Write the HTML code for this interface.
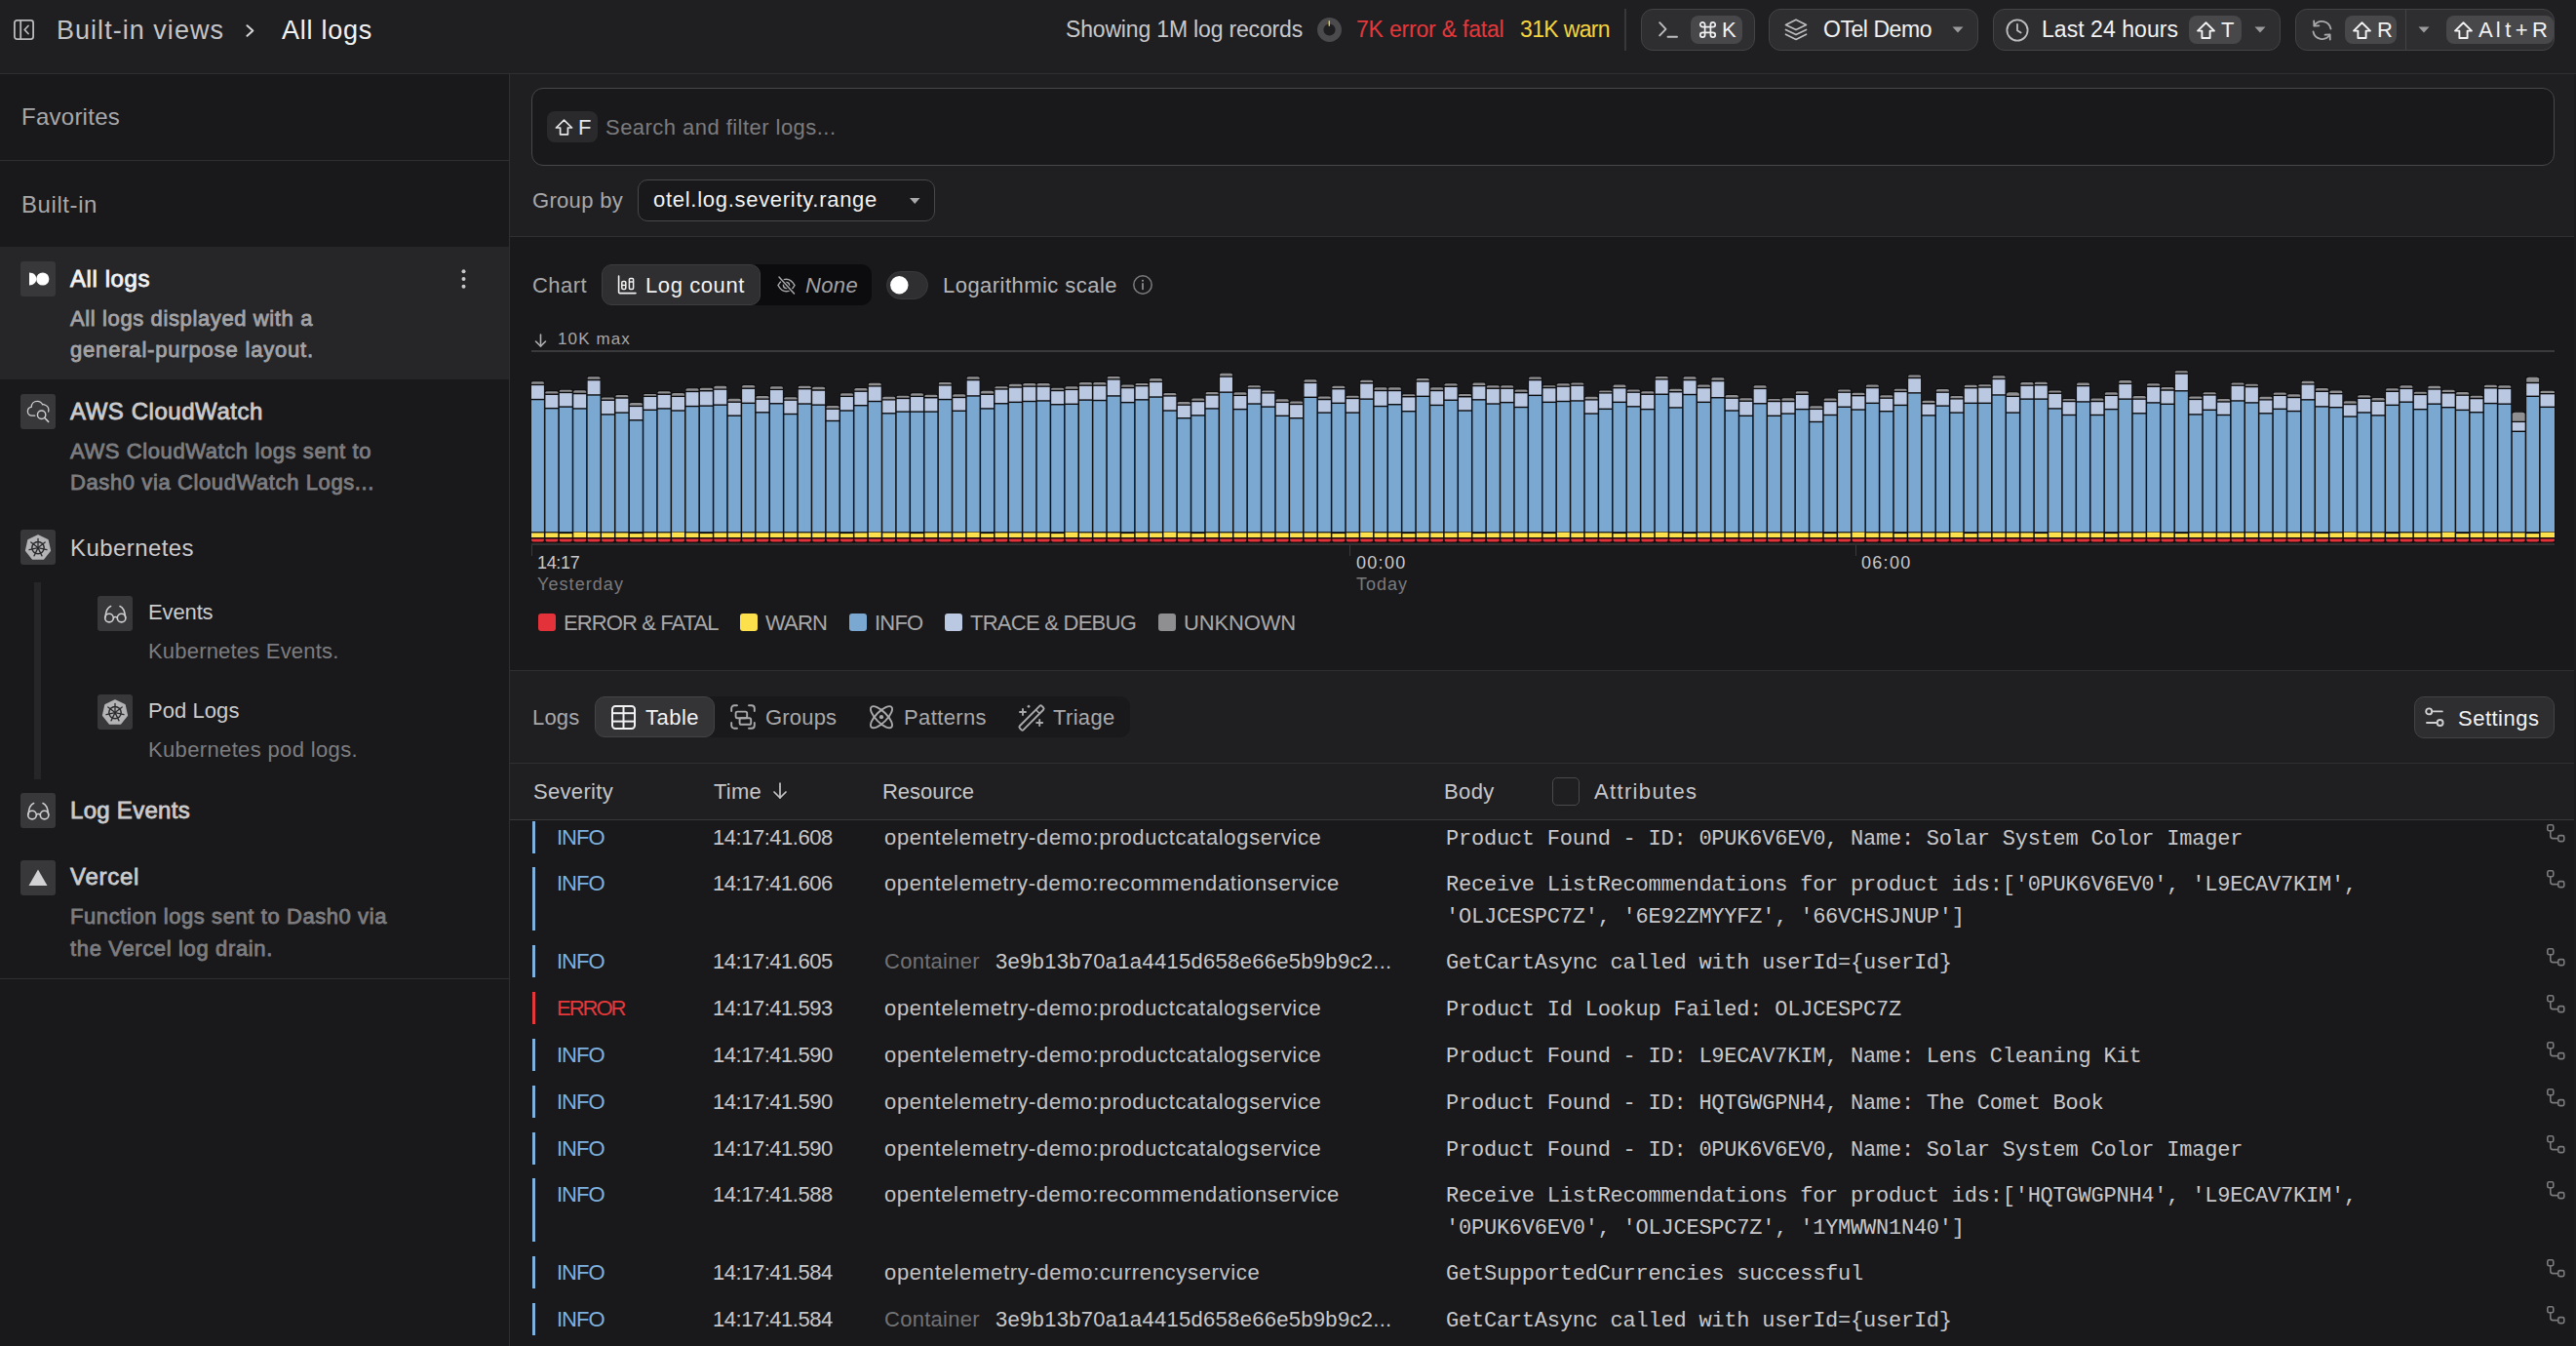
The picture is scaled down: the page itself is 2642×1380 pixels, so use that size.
<!DOCTYPE html>
<html><head><meta charset="utf-8"><title>All logs</title>
<style>
html,body{margin:0;padding:0;}
body{width:2642px;height:1380px;overflow:hidden;position:relative;background:#19191b;font-family:'Liberation Sans', sans-serif;}
.t{position:absolute;white-space:pre;}
svg{overflow:visible}
</style></head><body>
<div style="position:absolute;left:0px;top:0px;width:2642px;height:75px;background:#1f1f22;border-radius:0px;box-sizing:border-box;"></div><div style="position:absolute;left:0px;top:75px;width:2642px;height:1px;background:#2f2f32;border-radius:0px;box-sizing:border-box;"></div><svg style="position:absolute;left:14px;top:20px;" width="21" height="21" viewBox="0 0 21 21" fill="none"><rect x="0.9" y="0.9" width="19.2" height="19.2" rx="2.5" stroke="#b9b9bb" stroke-width="1.8"/><line x1="7.2" y1="1" x2="7.2" y2="20" stroke="#b9b9bb" stroke-width="1.8"/><path d="M15 6.5 L11.2 10.5 L15 14.5" stroke="#b9b9bb" stroke-width="1.8" stroke-linecap="round" stroke-linejoin="round"/></svg><div class="t" style="left:58px;top:18px;font-size:27px;line-height:27px;color:#c4c4c6;font-weight:400;font-family:'Liberation Sans', sans-serif;letter-spacing:1.032px;">Built-in views</div><svg style="position:absolute;left:252px;top:25px;" width="9" height="13" viewBox="0 0 9 13" fill="none"><path d="M1.5 1.2 L7.3 6.5 L1.5 11.8" stroke="#d6d6d8" stroke-width="2" stroke-linecap="round" stroke-linejoin="round"/></svg><div class="t" style="left:289px;top:18px;font-size:27px;line-height:27px;color:#f2f2f3;font-weight:400;font-family:'Liberation Sans', sans-serif;letter-spacing:0.744px;">All logs</div><div class="t" style="left:1093px;top:19px;font-size:23px;line-height:23px;color:#c8c8ca;font-weight:400;font-family:'Liberation Sans', sans-serif;letter-spacing:-0.170px;">Showing 1M log records</div><svg style="position:absolute;left:1351px;top:18px;" width="25" height="25" viewBox="0 0 25 25" fill="none"><circle cx="12.5" cy="12.5" r="9.3" stroke="#4b4b4e" stroke-width="6.4"/><path d="M12.3 3.2 L12.3 8.8" stroke="#f5d33d" stroke-width="1.3"/></svg><div class="t" style="left:1391px;top:19px;font-size:23px;line-height:23px;color:#e5383b;font-weight:400;font-family:'Liberation Sans', sans-serif;letter-spacing:-0.199px;">7K error &amp; fatal</div><div class="t" style="left:1559px;top:19px;font-size:23px;line-height:23px;color:#f5d33d;font-weight:400;font-family:'Liberation Sans', sans-serif;letter-spacing:-0.646px;">31K warn</div><div style="position:absolute;left:1666px;top:9px;width:2px;height:43px;background:#38383b;border-radius:0px;box-sizing:border-box;"></div><div style="position:absolute;left:1683px;top:9px;width:117px;height:43px;background:#2e2e31;border:1px solid #434346;border-radius:12px;box-sizing:border-box;"></div><svg style="position:absolute;left:1701px;top:22px;" width="20" height="18" viewBox="0 0 20 18" fill="none"><path d="M1.2 1.2 L7.5 7.8 L1.2 14.4" stroke="#bdbdbf" stroke-width="1.9" stroke-linecap="round" stroke-linejoin="round"/><line x1="9.5" y1="15.8" x2="19" y2="15.8" stroke="#bdbdbf" stroke-width="1.9" stroke-linecap="round"/></svg><div style="position:absolute;left:1734px;top:16px;width:53px;height:29px;background:#48484b;border-radius:8px;box-sizing:border-box;"></div><svg style="position:absolute;left:1743px;top:22px;" width="17" height="17" viewBox="0 0 17 17" fill="none"><path d="M5.6 3.2 L5.6 13.8 M11.4 3.2 L11.4 13.8 M3.2 5.6 L13.8 5.6 M3.2 11.4 L13.8 11.4 M5.6 3.2 A2.4 2.4 0 1 0 3.2 5.6 M11.4 3.2 A2.4 2.4 0 1 1 13.8 5.6 M5.6 13.8 A2.4 2.4 0 1 1 3.2 11.4 M11.4 13.8 A2.4 2.4 0 1 0 13.8 11.4" stroke="#f2f2f3" stroke-width="1.7"/></svg><div class="t" style="left:1766px;top:20px;font-size:22px;line-height:22px;color:#f2f2f3;font-weight:400;font-family:'Liberation Sans', sans-serif;letter-spacing:-0.688px;">K</div><div style="position:absolute;left:1814px;top:9px;width:215px;height:43px;background:#2e2e31;border:1px solid #434346;border-radius:12px;box-sizing:border-box;"></div><svg style="position:absolute;left:1830px;top:19px;" width="24" height="23" viewBox="0 0 24 23" fill="none"><path d="M12 1.2 L22.5 6.4 L12 11.6 L1.5 6.4 Z" stroke="#bdbdbf" stroke-width="1.7" stroke-linejoin="round"/><path d="M1.5 11.4 L12 16.6 L22.5 11.4" stroke="#bdbdbf" stroke-width="1.7" stroke-linecap="round" stroke-linejoin="round"/><path d="M1.5 16.2 L12 21.4 L22.5 16.2" stroke="#bdbdbf" stroke-width="1.7" stroke-linecap="round" stroke-linejoin="round"/></svg><div class="t" style="left:1870px;top:19px;font-size:23px;line-height:23px;color:#f2f2f3;font-weight:400;font-family:'Liberation Sans', sans-serif;letter-spacing:-0.450px;">OTel Demo</div><svg style="position:absolute;left:2002px;top:27px;" width="12" height="7" viewBox="0 0 12 7" fill="none"><path d="M0.5 0.5 L11.5 0.5 L6 6.5 Z" fill="#9a9a9d"/></svg><div style="position:absolute;left:2044px;top:9px;width:295px;height:43px;background:#2e2e31;border:1px solid #434346;border-radius:12px;box-sizing:border-box;"></div><svg style="position:absolute;left:2057px;top:19px;" width="24" height="24" viewBox="0 0 24 24" fill="none"><circle cx="12" cy="12" r="10.6" stroke="#bdbdbf" stroke-width="1.8"/><path d="M12 5.8 L12 12.2 L15.6 14.6" stroke="#bdbdbf" stroke-width="1.8" stroke-linecap="round" stroke-linejoin="round"/></svg><div class="t" style="left:2094px;top:19px;font-size:23px;line-height:23px;color:#f2f2f3;font-weight:400;font-family:'Liberation Sans', sans-serif;letter-spacing:0.048px;">Last 24 hours</div><div style="position:absolute;left:2245px;top:16px;width:54px;height:29px;background:#48484b;border-radius:8px;box-sizing:border-box;"></div><svg style="position:absolute;left:2253px;top:22px;" width="19" height="18" viewBox="0 0 19 18" fill="none"><path d="M9.5 1.2 L18 9.6 L13.6 9.6 L13.6 17 L5.4 17 L5.4 9.6 L1 9.6 Z" stroke="#f2f2f3" stroke-width="1.9" stroke-linejoin="round"/></svg><div class="t" style="left:2278px;top:20px;font-size:22px;line-height:22px;color:#f2f2f3;font-weight:400;font-family:'Liberation Sans', sans-serif;letter-spacing:-0.453px;">T</div><svg style="position:absolute;left:2312px;top:27px;" width="12" height="7" viewBox="0 0 12 7" fill="none"><path d="M0.5 0.5 L11.5 0.5 L6 6.5 Z" fill="#9a9a9d"/></svg><div style="position:absolute;left:2354px;top:9px;width:266px;height:43px;background:#2e2e31;border:1px solid #434346;border-radius:12px;box-sizing:border-box;"></div><svg style="position:absolute;left:2370px;top:20px;" width="23" height="22" viewBox="0 0 23 22" fill="none"><path d="M20.5 9.5 A9.3 9.3 0 0 0 3.6 6.2" stroke="#a9a9ab" stroke-width="1.8" stroke-linecap="round"/><path d="M3.2 1.5 L3.4 6.6 L8.4 6.4" stroke="#a9a9ab" stroke-width="1.8" stroke-linecap="round" stroke-linejoin="round"/><path d="M2.5 12.5 A9.3 9.3 0 0 0 19.4 15.8" stroke="#a9a9ab" stroke-width="1.8" stroke-linecap="round"/><path d="M19.8 20.5 L19.6 15.4 L14.6 15.6" stroke="#a9a9ab" stroke-width="1.8" stroke-linecap="round" stroke-linejoin="round"/></svg><div style="position:absolute;left:2405px;top:16px;width:53px;height:29px;background:#48484b;border-radius:8px;box-sizing:border-box;"></div><svg style="position:absolute;left:2413px;top:22px;" width="19" height="18" viewBox="0 0 19 18" fill="none"><path d="M9.5 1.2 L18 9.6 L13.6 9.6 L13.6 17 L5.4 17 L5.4 9.6 L1 9.6 Z" stroke="#f2f2f3" stroke-width="1.9" stroke-linejoin="round"/></svg><div class="t" style="left:2438px;top:20px;font-size:22px;line-height:22px;color:#f2f2f3;font-weight:400;font-family:'Liberation Sans', sans-serif;letter-spacing:-2.891px;">R</div><div style="position:absolute;left:2467px;top:9px;width:1px;height:43px;background:#434346;border-radius:0px;box-sizing:border-box;"></div><svg style="position:absolute;left:2480px;top:27px;" width="12" height="7" viewBox="0 0 12 7" fill="none"><path d="M0.5 0.5 L11.5 0.5 L6 6.5 Z" fill="#9a9a9d"/></svg><div style="position:absolute;left:2509px;top:16px;width:110px;height:29px;background:#48484b;border-radius:8px;box-sizing:border-box;"></div><svg style="position:absolute;left:2517px;top:22px;" width="19" height="18" viewBox="0 0 19 18" fill="none"><path d="M9.5 1.2 L18 9.6 L13.6 9.6 L13.6 17 L5.4 17 L5.4 9.6 L1 9.6 Z" stroke="#f2f2f3" stroke-width="1.9" stroke-linejoin="round"/></svg><div class="t" style="left:2542px;top:20px;font-size:22px;line-height:22px;color:#f2f2f3;font-weight:400;font-family:'Liberation Sans', sans-serif;letter-spacing:-0.851px;">A l t + R</div><div style="position:absolute;left:522px;top:76px;width:1px;height:1304px;background:#2f2f32;border-radius:0px;box-sizing:border-box;"></div><div class="t" style="left:22px;top:108px;font-size:24px;line-height:24px;color:#a8a8aa;font-weight:400;font-family:'Liberation Sans', sans-serif;letter-spacing:0.255px;">Favorites</div><div style="position:absolute;left:0px;top:164px;width:522px;height:1px;background:#2f2f32;border-radius:0px;box-sizing:border-box;"></div><div class="t" style="left:22px;top:198px;font-size:24px;line-height:24px;color:#a8a8aa;font-weight:400;font-family:'Liberation Sans', sans-serif;letter-spacing:0.580px;">Built-in</div><div style="position:absolute;left:0px;top:253px;width:522px;height:136px;background:#262629;border-radius:0px;box-sizing:border-box;"></div><div style="position:absolute;left:21px;top:268px;width:36px;height:36px;background:#38383b;border-radius:3px;box-sizing:border-box;"></div><svg style="position:absolute;left:29px;top:279px;" width="22" height="14" viewBox="0 0 22 14" fill="none"><path d="M1 0.6 C5.5 0.6 8.3 3.4 8.3 7 C8.3 10.6 5.5 13.4 1 13.4 Z" fill="#ffffff"/><circle cx="14.8" cy="7" r="6.6" fill="#ffffff"/></svg><div class="t" style="left:72px;top:274px;font-size:24px;-webkit-text-stroke:0.8px #f2f2f3;line-height:24px;color:#f2f2f3;font-weight:400;font-family:'Liberation Sans', sans-serif;letter-spacing:0.578px;">All logs</div><svg style="position:absolute;left:473px;top:276px;" width="5" height="20" viewBox="0 0 5 20" fill="none"><circle cx="2.5" cy="2.3" r="2" fill="#c8c8ca"/><circle cx="2.5" cy="10" r="2" fill="#c8c8ca"/><circle cx="2.5" cy="17.7" r="2" fill="#c8c8ca"/></svg><div class="t" style="left:72px;top:316px;font-size:22px;-webkit-text-stroke:0.8px #a3a3a6;line-height:22px;color:#a3a3a6;font-weight:400;font-family:'Liberation Sans', sans-serif;letter-spacing:0.617px;">All logs displayed with a</div><div class="t" style="left:72px;top:348px;font-size:22px;-webkit-text-stroke:0.8px #a3a3a6;line-height:22px;color:#a3a3a6;font-weight:400;font-family:'Liberation Sans', sans-serif;letter-spacing:0.819px;">general-purpose layout.</div><div style="position:absolute;left:21px;top:404px;width:36px;height:36px;background:#38383b;border-radius:3px;box-sizing:border-box;"></div><svg style="position:absolute;left:27px;top:408px;" width="28" height="28" viewBox="0 0 24 24" fill="none"><path d="M7.5 15.6 L5 15.6 C2.6 15.6 1.2 13.8 1.2 11.8 C1.2 9.8 2.6 8.2 4.4 8 C4.6 5 6.8 2.8 9.6 2.8 C11.8 2.8 13.4 4 14.3 5.8 C15.2 5.6 16 5.8 16.6 6.2 C18.4 7 19.6 8.6 19.6 10.6 L19.4 12" stroke="#d0d0d2" stroke-width="1.1" stroke-linecap="round"/><circle cx="13.4" cy="14.8" r="3.6" stroke="#d0d0d2" stroke-width="1.2"/><path d="M15.9 17.4 L19.4 20.9" stroke="#d0d0d2" stroke-width="1.3" stroke-linecap="round"/></svg><div class="t" style="left:72px;top:410px;font-size:24px;-webkit-text-stroke:0.8px #cbcbcd;line-height:24px;color:#cbcbcd;font-weight:400;font-family:'Liberation Sans', sans-serif;letter-spacing:0.551px;">AWS CloudWatch</div><div class="t" style="left:72px;top:452px;font-size:22px;-webkit-text-stroke:0.8px #7d7d80;line-height:22px;color:#7d7d80;font-weight:400;font-family:'Liberation Sans', sans-serif;letter-spacing:0.591px;">AWS CloudWatch logs sent to</div><div class="t" style="left:72px;top:484px;font-size:22px;-webkit-text-stroke:0.8px #7d7d80;line-height:22px;color:#7d7d80;font-weight:400;font-family:'Liberation Sans', sans-serif;letter-spacing:0.603px;">Dash0 via CloudWatch Logs...</div><div style="position:absolute;left:21px;top:543px;width:36px;height:36px;background:#38383b;border-radius:3px;box-sizing:border-box;"></div><svg style="position:absolute;left:21px;top:543px;" width="36" height="36" viewBox="0 0 36 36" fill="none"><path d="M18.0 6.0 L27.9 10.7 L30.3 21.4 L23.5 30.0 L12.5 30.0 L5.7 21.4 L8.1 10.7 Z" fill="#b4b4b7" stroke="#b4b4b7" stroke-width="1.6" stroke-linejoin="round"/><circle cx="18" cy="18.6" r="6.2" stroke="#2a2a2c" stroke-width="1.5"/><g stroke="#2a2a2c" stroke-width="1.3" stroke-linecap="round"><line x1="18" y1="18.6" x2="18.0" y2="9.4"/><line x1="18" y1="18.6" x2="25.2" y2="12.9"/><line x1="18" y1="18.6" x2="27.0" y2="20.6"/><line x1="18" y1="18.6" x2="22.0" y2="26.9"/><line x1="18" y1="18.6" x2="14.0" y2="26.9"/><line x1="18" y1="18.6" x2="9.0" y2="20.6"/><line x1="18" y1="18.6" x2="10.8" y2="12.9"/></g></svg><div class="t" style="left:72px;top:550px;font-size:24px;line-height:24px;color:#cbcbcd;font-weight:400;font-family:'Liberation Sans', sans-serif;letter-spacing:0.423px;">Kubernetes</div><div style="position:absolute;left:35px;top:597px;width:7px;height:202px;background:#262628;border-radius:0px;box-sizing:border-box;"></div><div style="position:absolute;left:100px;top:611px;width:36px;height:36px;background:#38383b;border-radius:3px;box-sizing:border-box;"></div><svg style="position:absolute;left:100px;top:611px;" width="36" height="36" viewBox="0 0 36 36" fill="none"><circle cx="12" cy="22.6" r="4.3" stroke="#cfcfd1" stroke-width="1.6"/><circle cx="24.6" cy="22.6" r="4.3" stroke="#cfcfd1" stroke-width="1.6"/><path d="M16.3 22.2 C17.2 21.2 19.4 21.2 20.3 22.2" stroke="#cfcfd1" stroke-width="1.4"/><path d="M8 22 C8.6 16 10.6 11.6 13.6 10.6" stroke="#cfcfd1" stroke-width="1.6" stroke-linecap="round"/><path d="M28.6 22 C28 16 26 11.6 23 10.6" stroke="#cfcfd1" stroke-width="1.6" stroke-linecap="round"/></svg><div class="t" style="left:152px;top:617px;font-size:22px;line-height:22px;color:#cbcbcd;font-weight:400;font-family:'Liberation Sans', sans-serif;letter-spacing:-0.128px;">Events</div><div class="t" style="left:152px;top:657px;font-size:22px;line-height:22px;color:#7d7d80;font-weight:400;font-family:'Liberation Sans', sans-serif;letter-spacing:0.194px;">Kubernetes Events.</div><div style="position:absolute;left:100px;top:712px;width:36px;height:36px;background:#38383b;border-radius:3px;box-sizing:border-box;"></div><svg style="position:absolute;left:100px;top:712px;" width="36" height="36" viewBox="0 0 36 36" fill="none"><path d="M18.0 6.0 L27.9 10.7 L30.3 21.4 L23.5 30.0 L12.5 30.0 L5.7 21.4 L8.1 10.7 Z" fill="#b4b4b7" stroke="#b4b4b7" stroke-width="1.6" stroke-linejoin="round"/><circle cx="18" cy="18.6" r="6.2" stroke="#2a2a2c" stroke-width="1.5"/><g stroke="#2a2a2c" stroke-width="1.3" stroke-linecap="round"><line x1="18" y1="18.6" x2="18.0" y2="9.4"/><line x1="18" y1="18.6" x2="25.2" y2="12.9"/><line x1="18" y1="18.6" x2="27.0" y2="20.6"/><line x1="18" y1="18.6" x2="22.0" y2="26.9"/><line x1="18" y1="18.6" x2="14.0" y2="26.9"/><line x1="18" y1="18.6" x2="9.0" y2="20.6"/><line x1="18" y1="18.6" x2="10.8" y2="12.9"/></g></svg><div class="t" style="left:152px;top:718px;font-size:22px;line-height:22px;color:#cbcbcd;font-weight:400;font-family:'Liberation Sans', sans-serif;letter-spacing:0.066px;">Pod Logs</div><div class="t" style="left:152px;top:758px;font-size:22px;line-height:22px;color:#7d7d80;font-weight:400;font-family:'Liberation Sans', sans-serif;letter-spacing:0.353px;">Kubernetes pod logs.</div><div style="position:absolute;left:21px;top:813px;width:36px;height:36px;background:#38383b;border-radius:3px;box-sizing:border-box;"></div><svg style="position:absolute;left:21px;top:813px;" width="36" height="36" viewBox="0 0 36 36" fill="none"><circle cx="12" cy="22.6" r="4.3" stroke="#cfcfd1" stroke-width="1.6"/><circle cx="24.6" cy="22.6" r="4.3" stroke="#cfcfd1" stroke-width="1.6"/><path d="M16.3 22.2 C17.2 21.2 19.4 21.2 20.3 22.2" stroke="#cfcfd1" stroke-width="1.4"/><path d="M8 22 C8.6 16 10.6 11.6 13.6 10.6" stroke="#cfcfd1" stroke-width="1.6" stroke-linecap="round"/><path d="M28.6 22 C28 16 26 11.6 23 10.6" stroke="#cfcfd1" stroke-width="1.6" stroke-linecap="round"/></svg><div class="t" style="left:72px;top:819px;font-size:24px;-webkit-text-stroke:0.8px #cbcbcd;line-height:24px;color:#cbcbcd;font-weight:400;font-family:'Liberation Sans', sans-serif;letter-spacing:0.291px;">Log Events</div><div style="position:absolute;left:21px;top:882px;width:36px;height:36px;background:#38383b;border-radius:3px;box-sizing:border-box;"></div><svg style="position:absolute;left:21px;top:882px;" width="36" height="36" viewBox="0 0 36 36" fill="none"><path d="M18 9.5 L27.5 26 L8.5 26 Z" fill="#d2d2d4"/></svg><div class="t" style="left:72px;top:887px;font-size:24px;-webkit-text-stroke:0.8px #cbcbcd;line-height:24px;color:#cbcbcd;font-weight:400;font-family:'Liberation Sans', sans-serif;letter-spacing:0.716px;">Vercel</div><div class="t" style="left:72px;top:929px;font-size:22px;-webkit-text-stroke:0.8px #7d7d80;line-height:22px;color:#7d7d80;font-weight:400;font-family:'Liberation Sans', sans-serif;letter-spacing:0.582px;">Function logs sent to Dash0 via</div><div class="t" style="left:72px;top:962px;font-size:22px;-webkit-text-stroke:0.8px #7d7d80;line-height:22px;color:#7d7d80;font-weight:400;font-family:'Liberation Sans', sans-serif;letter-spacing:0.644px;">the Vercel log drain.</div><div style="position:absolute;left:0px;top:1003px;width:522px;height:1px;background:#2f2f32;border-radius:0px;box-sizing:border-box;"></div><div style="position:absolute;left:523px;top:76px;width:2119px;height:166px;background:#1f1f22;border-radius:0px;box-sizing:border-box;"></div><div style="position:absolute;left:523px;top:242px;width:2119px;height:1px;background:#2f2f32;border-radius:0px;box-sizing:border-box;"></div><div style="position:absolute;left:545px;top:90px;width:2075px;height:80px;background:#19191b;border:1px solid #48484b;border-radius:12px;box-sizing:border-box;"></div><div style="position:absolute;left:561px;top:114px;width:52px;height:32px;background:#2a2a2d;border-radius:8px;box-sizing:border-box;"></div><svg style="position:absolute;left:569px;top:122px;" width="19" height="17" viewBox="0 0 19 17" fill="none"><path d="M9.5 1.2 L17.6 9 L13.4 9 L13.4 15.8 L5.6 15.8 L5.6 9 L1.4 9 Z" stroke="#e6e6e8" stroke-width="1.7" stroke-linejoin="round"/></svg><div class="t" style="left:593px;top:120px;font-size:22px;line-height:22px;color:#e6e6e8;font-weight:400;font-family:'Liberation Sans', sans-serif;letter-spacing:-1.453px;">F</div><div class="t" style="left:621px;top:120px;font-size:22px;line-height:22px;color:#7b7b7e;font-weight:400;font-family:'Liberation Sans', sans-serif;letter-spacing:0.459px;">Search and filter logs...</div><div class="t" style="left:546px;top:195px;font-size:22px;line-height:22px;color:#a8a8aa;font-weight:400;font-family:'Liberation Sans', sans-serif;letter-spacing:0.312px;">Group by</div><div style="position:absolute;left:654px;top:184px;width:305px;height:43px;background:#19191b;border:1px solid #48484b;border-radius:10px;box-sizing:border-box;"></div><div class="t" style="left:670px;top:194px;font-size:22px;line-height:22px;color:#f2f2f3;font-weight:400;font-family:'Liberation Sans', sans-serif;letter-spacing:0.713px;">otel.log.severity.range</div><svg style="position:absolute;left:933px;top:203px;" width="11" height="6" viewBox="0 0 11 6" fill="none"><path d="M0 0 L10.5 0 L5.25 6 Z" fill="#a9a9ab"/></svg><div class="t" style="left:546px;top:282px;font-size:22px;line-height:22px;color:#a8a8aa;font-weight:400;font-family:'Liberation Sans', sans-serif;letter-spacing:0.441px;">Chart</div><div style="position:absolute;left:617px;top:271px;width:277px;height:42px;background:#0c0c0e;border-radius:10px;box-sizing:border-box;"></div><div style="position:absolute;left:617px;top:271px;width:163px;height:42px;background:#2f2f32;border:1px solid #3d3d40;border-radius:10px;box-sizing:border-box;"></div><svg style="position:absolute;left:633px;top:282px;" width="20" height="20" viewBox="0 0 20 20" fill="none"><path d="M1.6 1 L1.6 17.6 C1.6 18.2 2 18.6 2.6 18.6 L19 18.6" stroke="#f2f2f3" stroke-width="1.6" stroke-linecap="round"/><rect x="4.8" y="6.4" width="4" height="8" rx="1.2" stroke="#f2f2f3" stroke-width="1.5"/><line x1="4.8" y1="10.4" x2="8.8" y2="10.4" stroke="#f2f2f3" stroke-width="1.4"/><rect x="12.4" y="3.4" width="4.2" height="11" rx="1.2" stroke="#f2f2f3" stroke-width="1.5"/><line x1="12.4" y1="7" x2="16.6" y2="7" stroke="#f2f2f3" stroke-width="1.4"/></svg><div class="t" style="left:662px;top:282px;font-size:22px;line-height:22px;color:#f2f2f3;font-weight:400;font-family:'Liberation Sans', sans-serif;letter-spacing:0.595px;">Log count</div><svg style="position:absolute;left:796px;top:283px;" width="21" height="19" viewBox="0 0 21 19" fill="none"><path d="M2 9.5 C4.5 5 7.5 3.2 10.5 3.2 C13.5 3.2 16.5 5 19 9.5 C16.5 14 13.5 15.8 10.5 15.8 C7.5 15.8 4.5 14 2 9.5 Z" stroke="#a9a9ab" stroke-width="1.5"/><circle cx="10.5" cy="9.5" r="3" stroke="#a9a9ab" stroke-width="1.5"/><line x1="3" y1="1" x2="18.5" y2="18" stroke="#0c0c0e" stroke-width="3.4"/><line x1="3" y1="1" x2="18.5" y2="18" stroke="#a9a9ab" stroke-width="1.5" stroke-linecap="round"/></svg><div class="t" style="left:826px;top:282px;font-size:22px;line-height:22px;color:#a2a2a5;font-weight:400;font-family:'Liberation Sans', sans-serif;font-style:italic;letter-spacing:0.352px;">None</div><div style="position:absolute;left:909px;top:278px;width:43px;height:29px;background:#2f2f32;border:1px solid #3a3a3d;border-radius:15px;box-sizing:border-box;"></div><svg style="position:absolute;left:913px;top:283px;" width="19" height="19" viewBox="0 0 19 19" fill="none"><circle cx="9.3" cy="9.3" r="9.2" fill="#ffffff"/></svg><div class="t" style="left:967px;top:282px;font-size:22px;line-height:22px;color:#b5b5b7;font-weight:400;font-family:'Liberation Sans', sans-serif;letter-spacing:0.460px;">Logarithmic scale</div><svg style="position:absolute;left:1162px;top:282px;" width="20" height="20" viewBox="0 0 20 20" fill="none"><circle cx="10" cy="10" r="9.2" stroke="#7c7c7f" stroke-width="1.5"/><line x1="10" y1="8.8" x2="10" y2="14.5" stroke="#9a9a9d" stroke-width="1.6" stroke-linecap="round"/><circle cx="10" cy="5.8" r="1" fill="#9a9a9d"/></svg><svg style="position:absolute;left:548px;top:342px;" width="13" height="14" viewBox="0 0 13 14" fill="none"><path d="M6.5 1 L6.5 13" stroke="#b0b0b2" stroke-width="1.6" stroke-linecap="round"/><path d="M1.5 8 L6.5 13 L11.5 8" stroke="#b0b0b2" stroke-width="1.6" stroke-linecap="round" stroke-linejoin="round"/></svg><div class="t" style="left:572px;top:339px;font-size:17px;line-height:17px;color:#a8a8aa;font-weight:400;font-family:'Liberation Sans', sans-serif;letter-spacing:1.129px;">10K max</div><div style="position:absolute;left:545px;top:359px;width:2075px;height:2px;background:#3a3a3d;border-radius:0px;box-sizing:border-box;"></div><svg style="position:absolute;left:0;top:0" width="2642" height="600" viewBox="0 0 2642 600"><rect x="544.50" y="390.55" width="13.90" height="165.65" fill="#0b0b0d"/><path d="M545.00 393.76 L545.00 392.56 Q545.00 391.35 546.93 391.35 L555.97 391.35 Q557.90 391.35 557.90 392.56 L557.90 393.76 Z" fill="#8f8f91"/><rect x="545.00" y="395.16" width="12.90" height="13.69" fill="#bac8e2"/><rect x="545.00" y="410.26" width="12.90" height="134.94" fill="#7ba8d0"/><rect x="545.00" y="546.40" width="12.90" height="4.60" fill="#fde14c"/><path d="M545.00 552.40 L557.90 552.40 L557.90 554.00 Q557.90 555.60 555.34 555.60 L547.56 555.60 Q545.00 555.60 545.00 554.00 Z" fill="#e3323a"/><rect x="558.91" y="400.33" width="13.90" height="155.87" fill="#0b0b0d"/><path d="M559.41 403.55 L559.41 402.34 Q559.41 401.13 561.34 401.13 L570.38 401.13 Q572.31 401.13 572.31 402.34 L572.31 403.55 Z" fill="#8f8f91"/><rect x="559.41" y="404.95" width="12.90" height="12.99" fill="#bac8e2"/><rect x="559.41" y="419.34" width="12.90" height="125.86" fill="#7ba8d0"/><rect x="559.41" y="546.40" width="12.90" height="4.60" fill="#fde14c"/><path d="M559.41 552.40 L572.31 552.40 L572.31 554.00 Q572.31 555.60 569.75 555.60 L561.97 555.60 Q559.41 555.60 559.41 554.00 Z" fill="#e3323a"/><rect x="573.32" y="398.93" width="13.90" height="157.27" fill="#0b0b0d"/><path d="M573.82 401.73 L573.82 400.73 Q573.82 399.73 575.42 399.73 L585.12 399.73 Q586.72 399.73 586.72 400.73 L586.72 401.73 Z" fill="#8f8f91"/><rect x="573.82" y="403.13" width="12.90" height="13.27" fill="#bac8e2"/><rect x="573.82" y="417.80" width="12.90" height="127.40" fill="#7ba8d0"/><rect x="573.82" y="547.10" width="12.90" height="3.90" fill="#fde14c"/><path d="M573.82 552.40 L586.72 552.40 L586.72 554.00 Q586.72 555.60 584.16 555.60 L576.38 555.60 Q573.82 555.60 573.82 554.00 Z" fill="#e3323a"/><rect x="587.73" y="399.35" width="13.90" height="156.85" fill="#0b0b0d"/><path d="M588.23 402.85 L588.23 401.50 Q588.23 400.15 590.38 400.15 L598.97 400.15 Q601.13 400.15 601.13 401.50 L601.13 402.85 Z" fill="#8f8f91"/><rect x="588.23" y="404.25" width="12.90" height="13.97" fill="#bac8e2"/><rect x="588.23" y="419.62" width="12.90" height="125.58" fill="#7ba8d0"/><rect x="588.23" y="545.70" width="12.90" height="5.30" fill="#fde14c"/><path d="M588.23 552.40 L601.13 552.40 L601.13 554.00 Q601.13 555.60 598.57 555.60 L590.79 555.60 Q588.23 555.60 588.23 554.00 Z" fill="#e3323a"/><rect x="602.14" y="385.38" width="13.90" height="170.82" fill="#0b0b0d"/><path d="M602.64 388.87 L602.64 387.53 Q602.64 386.18 604.79 386.18 L613.38 386.18 Q615.54 386.18 615.54 387.53 L615.54 388.87 Z" fill="#8f8f91"/><rect x="602.64" y="390.27" width="12.90" height="13.97" fill="#bac8e2"/><rect x="602.64" y="405.64" width="12.90" height="139.56" fill="#7ba8d0"/><rect x="602.64" y="546.40" width="12.90" height="4.60" fill="#fde14c"/><path d="M602.64 552.40 L615.54 552.40 L615.54 554.00 Q615.54 555.60 612.98 555.60 L605.20 555.60 Q602.64 555.60 602.64 554.00 Z" fill="#e3323a"/><rect x="616.55" y="406.62" width="13.90" height="149.58" fill="#0b0b0d"/><path d="M617.05 409.55 L617.05 408.49 Q617.05 407.42 618.76 407.42 L628.24 407.42 Q629.95 407.42 629.95 408.49 L629.95 409.55 Z" fill="#8f8f91"/><rect x="617.05" y="410.95" width="12.90" height="13.27" fill="#bac8e2"/><rect x="617.05" y="425.63" width="12.90" height="119.57" fill="#7ba8d0"/><rect x="617.05" y="546.40" width="12.90" height="4.60" fill="#fde14c"/><path d="M617.05 552.40 L629.95 552.40 L629.95 554.00 Q629.95 555.60 627.39 555.60 L619.61 555.60 Q617.05 555.60 617.05 554.00 Z" fill="#e3323a"/><rect x="630.96" y="404.10" width="13.90" height="152.10" fill="#0b0b0d"/><path d="M631.46 407.32 L631.46 406.11 Q631.46 404.90 633.39 404.90 L642.43 404.90 Q644.36 404.90 644.36 406.11 L644.36 407.32 Z" fill="#8f8f91"/><rect x="631.46" y="408.72" width="12.90" height="13.69" fill="#bac8e2"/><rect x="631.46" y="423.81" width="12.90" height="121.39" fill="#7ba8d0"/><rect x="631.46" y="546.40" width="12.90" height="4.60" fill="#fde14c"/><path d="M631.46 552.40 L644.36 552.40 L644.36 554.00 Q644.36 555.60 641.80 555.60 L634.02 555.60 Q631.46 555.60 631.46 554.00 Z" fill="#e3323a"/><rect x="645.37" y="412.21" width="13.90" height="143.99" fill="#0b0b0d"/><path d="M645.87 415.70 L645.87 414.36 Q645.87 413.01 648.02 413.01 L656.61 413.01 Q658.77 413.01 658.77 414.36 L658.77 415.70 Z" fill="#8f8f91"/><rect x="645.87" y="417.10" width="12.90" height="12.99" fill="#bac8e2"/><rect x="645.87" y="431.50" width="12.90" height="113.70" fill="#7ba8d0"/><rect x="645.87" y="547.10" width="12.90" height="3.90" fill="#fde14c"/><path d="M645.87 552.40 L658.77 552.40 L658.77 554.00 Q658.77 555.60 656.21 555.60 L648.43 555.60 Q645.87 555.60 645.87 554.00 Z" fill="#e3323a"/><rect x="659.78" y="403.27" width="13.90" height="152.93" fill="#0b0b0d"/><path d="M660.28 405.64 L660.28 404.85 Q660.28 404.07 661.54 404.07 L671.92 404.07 Q673.18 404.07 673.18 404.85 L673.18 405.64 Z" fill="#8f8f91"/><rect x="660.28" y="407.04" width="12.90" height="12.57" fill="#bac8e2"/><rect x="660.28" y="421.02" width="12.90" height="124.18" fill="#7ba8d0"/><rect x="660.28" y="546.40" width="12.90" height="4.60" fill="#fde14c"/><path d="M660.28 552.40 L673.18 552.40 L673.18 554.00 Q673.18 555.60 670.62 555.60 L662.84 555.60 Q660.28 555.60 660.28 554.00 Z" fill="#e3323a"/><rect x="674.19" y="400.33" width="13.90" height="155.87" fill="#0b0b0d"/><path d="M674.69 403.55 L674.69 402.34 Q674.69 401.13 676.62 401.13 L685.66 401.13 Q687.59 401.13 687.59 402.34 L687.59 403.55 Z" fill="#8f8f91"/><rect x="674.69" y="404.95" width="12.90" height="13.27" fill="#bac8e2"/><rect x="674.69" y="419.62" width="12.90" height="125.58" fill="#7ba8d0"/><rect x="674.69" y="546.40" width="12.90" height="4.60" fill="#fde14c"/><path d="M674.69 552.40 L687.59 552.40 L687.59 554.00 Q687.59 555.60 685.03 555.60 L677.25 555.60 Q674.69 555.60 674.69 554.00 Z" fill="#e3323a"/><rect x="688.60" y="402.15" width="13.90" height="154.05" fill="#0b0b0d"/><path d="M689.10 405.64 L689.10 404.30 Q689.10 402.95 691.25 402.95 L699.84 402.95 Q702.00 402.95 702.00 404.30 L702.00 405.64 Z" fill="#8f8f91"/><rect x="689.10" y="407.04" width="12.90" height="13.27" fill="#bac8e2"/><rect x="689.10" y="421.72" width="12.90" height="123.48" fill="#7ba8d0"/><rect x="689.10" y="545.70" width="12.90" height="5.30" fill="#fde14c"/><path d="M689.10 552.40 L702.00 552.40 L702.00 554.00 Q702.00 555.60 699.44 555.60 L691.66 555.60 Q689.10 555.60 689.10 554.00 Z" fill="#e3323a"/><rect x="703.01" y="397.54" width="13.90" height="158.66" fill="#0b0b0d"/><path d="M703.51 400.75 L703.51 399.54 Q703.51 398.34 705.44 398.34 L714.48 398.34 Q716.41 398.34 716.41 399.54 L716.41 400.75 Z" fill="#8f8f91"/><rect x="703.51" y="402.15" width="12.90" height="13.69" fill="#bac8e2"/><rect x="703.51" y="417.24" width="12.90" height="127.96" fill="#7ba8d0"/><rect x="703.51" y="546.40" width="12.90" height="4.60" fill="#fde14c"/><path d="M703.51 552.40 L716.41 552.40 L716.41 554.00 Q716.41 555.60 713.85 555.60 L706.07 555.60 Q703.51 555.60 703.51 554.00 Z" fill="#e3323a"/><rect x="717.42" y="396.84" width="13.90" height="159.36" fill="#0b0b0d"/><path d="M717.92 400.05 L717.92 398.85 Q717.92 397.64 719.85 397.64 L728.89 397.64 Q730.82 397.64 730.82 398.85 L730.82 400.05 Z" fill="#8f8f91"/><rect x="717.92" y="401.45" width="12.90" height="13.97" fill="#bac8e2"/><rect x="717.92" y="416.82" width="12.90" height="128.38" fill="#7ba8d0"/><rect x="717.92" y="547.10" width="12.90" height="3.90" fill="#fde14c"/><path d="M717.92 552.40 L730.82 552.40 L730.82 554.00 Q730.82 555.60 728.26 555.60 L720.48 555.60 Q717.92 555.60 717.92 554.00 Z" fill="#e3323a"/><rect x="731.83" y="394.88" width="13.90" height="161.32" fill="#0b0b0d"/><path d="M732.33 398.38 L732.33 397.03 Q732.33 395.68 734.48 395.68 L743.07 395.68 Q745.23 395.68 745.23 397.03 L745.23 398.38 Z" fill="#8f8f91"/><rect x="732.33" y="399.78" width="12.90" height="14.67" fill="#bac8e2"/><rect x="732.33" y="415.85" width="12.90" height="129.35" fill="#7ba8d0"/><rect x="732.33" y="546.40" width="12.90" height="4.60" fill="#fde14c"/><path d="M732.33 552.40 L745.23 552.40 L745.23 554.00 Q745.23 555.60 742.67 555.60 L734.89 555.60 Q732.33 555.60 732.33 554.00 Z" fill="#e3323a"/><rect x="746.24" y="408.02" width="13.90" height="148.18" fill="#0b0b0d"/><path d="M746.74 411.51 L746.74 410.16 Q746.74 408.82 748.89 408.82 L757.48 408.82 Q759.64 408.82 759.64 410.16 L759.64 411.51 Z" fill="#8f8f91"/><rect x="746.74" y="412.91" width="12.90" height="12.57" fill="#bac8e2"/><rect x="746.74" y="426.89" width="12.90" height="118.31" fill="#7ba8d0"/><rect x="746.74" y="546.40" width="12.90" height="4.60" fill="#fde14c"/><path d="M746.74 552.40 L759.64 552.40 L759.64 554.00 Q759.64 555.60 757.08 555.60 L749.30 555.60 Q746.74 555.60 746.74 554.00 Z" fill="#e3323a"/><rect x="760.65" y="394.18" width="13.90" height="162.02" fill="#0b0b0d"/><path d="M761.15 397.54 L761.15 396.26 Q761.15 394.98 763.19 394.98 L772.00 394.98 Q774.05 394.98 774.05 396.26 L774.05 397.54 Z" fill="#8f8f91"/><rect x="761.15" y="398.94" width="12.90" height="13.69" fill="#bac8e2"/><rect x="761.15" y="414.03" width="12.90" height="131.17" fill="#7ba8d0"/><rect x="761.15" y="546.40" width="12.90" height="4.60" fill="#fde14c"/><path d="M761.15 552.40 L774.05 552.40 L774.05 554.00 Q774.05 555.60 771.49 555.60 L763.71 555.60 Q761.15 555.60 761.15 554.00 Z" fill="#e3323a"/><rect x="775.06" y="405.22" width="13.90" height="150.98" fill="#0b0b0d"/><path d="M775.56 408.44 L775.56 407.23 Q775.56 406.02 777.49 406.02 L786.52 406.02 Q788.46 406.02 788.46 407.23 L788.46 408.44 Z" fill="#8f8f91"/><rect x="775.56" y="409.84" width="12.90" height="12.29" fill="#bac8e2"/><rect x="775.56" y="423.53" width="12.90" height="121.67" fill="#7ba8d0"/><rect x="775.56" y="546.40" width="12.90" height="4.60" fill="#fde14c"/><path d="M775.56 552.40 L788.46 552.40 L788.46 554.00 Q788.46 555.60 785.90 555.60 L778.12 555.60 Q775.56 555.60 775.56 554.00 Z" fill="#e3323a"/><rect x="789.47" y="395.44" width="13.90" height="160.76" fill="#0b0b0d"/><path d="M789.97 398.66 L789.97 397.45 Q789.97 396.24 791.90 396.24 L800.93 396.24 Q802.87 396.24 802.87 397.45 L802.87 398.66 Z" fill="#8f8f91"/><rect x="789.97" y="400.06" width="12.90" height="12.99" fill="#bac8e2"/><rect x="789.97" y="414.45" width="12.90" height="130.75" fill="#7ba8d0"/><rect x="789.97" y="546.40" width="12.90" height="4.60" fill="#fde14c"/><path d="M789.97 552.40 L802.87 552.40 L802.87 554.00 Q802.87 555.60 800.31 555.60 L792.53 555.60 Q789.97 555.60 789.97 554.00 Z" fill="#e3323a"/><rect x="803.88" y="406.34" width="13.90" height="149.86" fill="#0b0b0d"/><path d="M804.38 409.42 L804.38 408.28 Q804.38 407.14 806.19 407.14 L815.46 407.14 Q817.27 407.14 817.27 408.28 L817.27 409.42 Z" fill="#8f8f91"/><rect x="804.38" y="410.82" width="12.90" height="12.99" fill="#bac8e2"/><rect x="804.38" y="425.21" width="12.90" height="119.99" fill="#7ba8d0"/><rect x="804.38" y="546.40" width="12.90" height="4.60" fill="#fde14c"/><path d="M804.38 552.40 L817.27 552.40 L817.27 554.00 Q817.27 555.60 814.72 555.60 L806.93 555.60 Q804.38 555.60 804.38 554.00 Z" fill="#e3323a"/><rect x="818.28" y="394.88" width="13.90" height="161.32" fill="#0b0b0d"/><path d="M818.78 397.96 L818.78 396.82 Q818.78 395.68 820.60 395.68 L829.87 395.68 Q831.68 395.68 831.68 396.82 L831.68 397.96 Z" fill="#8f8f91"/><rect x="818.78" y="399.36" width="12.90" height="13.97" fill="#bac8e2"/><rect x="818.78" y="414.73" width="12.90" height="130.47" fill="#7ba8d0"/><rect x="818.78" y="546.40" width="12.90" height="4.60" fill="#fde14c"/><path d="M818.78 552.40 L831.68 552.40 L831.68 554.00 Q831.68 555.60 829.12 555.60 L821.34 555.60 Q818.78 555.60 818.78 554.00 Z" fill="#e3323a"/><rect x="832.69" y="395.86" width="13.90" height="160.34" fill="#0b0b0d"/><path d="M833.19 399.35 L833.19 398.01 Q833.19 396.66 835.35 396.66 L843.94 396.66 Q846.09 396.66 846.09 398.01 L846.09 399.35 Z" fill="#8f8f91"/><rect x="833.19" y="400.75" width="12.90" height="13.69" fill="#bac8e2"/><rect x="833.19" y="415.85" width="12.90" height="129.35" fill="#7ba8d0"/><rect x="833.19" y="546.40" width="12.90" height="4.60" fill="#fde14c"/><path d="M833.19 552.40 L846.09 552.40 L846.09 554.00 Q846.09 555.60 843.53 555.60 L835.75 555.60 Q833.19 555.60 833.19 554.00 Z" fill="#e3323a"/><rect x="847.10" y="415.14" width="13.90" height="141.06" fill="#0b0b0d"/><path d="M847.60 418.50 L847.60 417.22 Q847.60 415.94 849.65 415.94 L858.46 415.94 Q860.50 415.94 860.50 417.22 L860.50 418.50 Z" fill="#8f8f91"/><rect x="847.60" y="419.90" width="12.90" height="10.90" fill="#bac8e2"/><rect x="847.60" y="432.20" width="12.90" height="113.00" fill="#7ba8d0"/><rect x="847.60" y="546.40" width="12.90" height="4.60" fill="#fde14c"/><path d="M847.60 552.40 L860.50 552.40 L860.50 554.00 Q860.50 555.60 857.94 555.60 L850.16 555.60 Q847.60 555.60 847.60 554.00 Z" fill="#e3323a"/><rect x="861.51" y="402.57" width="13.90" height="153.63" fill="#0b0b0d"/><path d="M862.01 405.64 L862.01 404.50 Q862.01 403.37 863.83 403.37 L873.09 403.37 Q874.91 403.37 874.91 404.50 L874.91 405.64 Z" fill="#8f8f91"/><rect x="862.01" y="407.04" width="12.90" height="13.27" fill="#bac8e2"/><rect x="862.01" y="421.72" width="12.90" height="123.48" fill="#7ba8d0"/><rect x="862.01" y="547.10" width="12.90" height="3.90" fill="#fde14c"/><path d="M862.01 552.40 L874.91 552.40 L874.91 554.00 Q874.91 555.60 872.35 555.60 L864.57 555.60 Q862.01 555.60 862.01 554.00 Z" fill="#e3323a"/><rect x="875.92" y="397.26" width="13.90" height="158.94" fill="#0b0b0d"/><path d="M876.42 400.47 L876.42 399.26 Q876.42 398.06 878.35 398.06 L887.39 398.06 Q889.32 398.06 889.32 399.26 L889.32 400.47 Z" fill="#8f8f91"/><rect x="876.42" y="401.87" width="12.90" height="13.13" fill="#bac8e2"/><rect x="876.42" y="416.40" width="12.90" height="128.80" fill="#7ba8d0"/><rect x="876.42" y="546.40" width="12.90" height="4.60" fill="#fde14c"/><path d="M876.42 552.40 L889.32 552.40 L889.32 554.00 Q889.32 555.60 886.76 555.60 L878.98 555.60 Q876.42 555.60 876.42 554.00 Z" fill="#e3323a"/><rect x="890.33" y="391.95" width="13.90" height="164.25" fill="#0b0b0d"/><path d="M890.83 395.16 L890.83 393.95 Q890.83 392.75 892.76 392.75 L901.80 392.75 Q903.73 392.75 903.73 393.95 L903.73 395.16 Z" fill="#8f8f91"/><rect x="890.83" y="396.56" width="12.90" height="14.25" fill="#bac8e2"/><rect x="890.83" y="412.21" width="12.90" height="132.99" fill="#7ba8d0"/><rect x="890.83" y="545.70" width="12.90" height="5.30" fill="#fde14c"/><path d="M890.83 552.40 L903.73 552.40 L903.73 554.00 Q903.73 555.60 901.17 555.60 L893.39 555.60 Q890.83 555.60 890.83 554.00 Z" fill="#e3323a"/><rect x="904.74" y="406.06" width="13.90" height="150.14" fill="#0b0b0d"/><path d="M905.24 409.14 L905.24 408.00 Q905.24 406.86 907.06 406.86 L916.32 406.86 Q918.14 406.86 918.14 408.00 L918.14 409.14 Z" fill="#8f8f91"/><rect x="905.24" y="410.54" width="12.90" height="12.57" fill="#bac8e2"/><rect x="905.24" y="424.51" width="12.90" height="120.69" fill="#7ba8d0"/><rect x="905.24" y="546.40" width="12.90" height="4.60" fill="#fde14c"/><path d="M905.24 552.40 L918.14 552.40 L918.14 554.00 Q918.14 555.60 915.58 555.60 L907.80 555.60 Q905.24 555.60 905.24 554.00 Z" fill="#e3323a"/><rect x="919.15" y="404.94" width="13.90" height="151.26" fill="#0b0b0d"/><path d="M919.65 407.74 L919.65 406.74 Q919.65 405.74 921.25 405.74 L930.96 405.74 Q932.55 405.74 932.55 406.74 L932.55 407.74 Z" fill="#8f8f91"/><rect x="919.65" y="409.14" width="12.90" height="12.29" fill="#bac8e2"/><rect x="919.65" y="422.83" width="12.90" height="122.37" fill="#7ba8d0"/><rect x="919.65" y="546.40" width="12.90" height="4.60" fill="#fde14c"/><path d="M919.65 552.40 L932.55 552.40 L932.55 554.00 Q932.55 555.60 929.99 555.60 L922.21 555.60 Q919.65 555.60 919.65 554.00 Z" fill="#e3323a"/><rect x="933.56" y="402.43" width="13.90" height="153.77" fill="#0b0b0d"/><path d="M934.06 405.64 L934.06 404.44 Q934.06 403.23 935.99 403.23 L945.03 403.23 Q946.96 403.23 946.96 404.44 L946.96 405.64 Z" fill="#8f8f91"/><rect x="934.06" y="407.04" width="12.90" height="14.39" fill="#bac8e2"/><rect x="934.06" y="422.83" width="12.90" height="122.37" fill="#7ba8d0"/><rect x="934.06" y="547.10" width="12.90" height="3.90" fill="#fde14c"/><path d="M934.06 552.40 L946.96 552.40 L946.96 554.00 Q946.96 555.60 944.40 555.60 L936.62 555.60 Q934.06 555.60 934.06 554.00 Z" fill="#e3323a"/><rect x="947.97" y="403.97" width="13.90" height="152.23" fill="#0b0b0d"/><path d="M948.47 407.04 L948.47 405.90 Q948.47 404.77 950.29 404.77 L959.55 404.77 Q961.37 404.77 961.37 405.90 L961.37 407.04 Z" fill="#8f8f91"/><rect x="948.47" y="408.44" width="12.90" height="12.99" fill="#bac8e2"/><rect x="948.47" y="422.83" width="12.90" height="122.37" fill="#7ba8d0"/><rect x="948.47" y="546.40" width="12.90" height="4.60" fill="#fde14c"/><path d="M948.47 552.40 L961.37 552.40 L961.37 554.00 Q961.37 555.60 958.81 555.60 L951.03 555.60 Q948.47 555.60 948.47 554.00 Z" fill="#e3323a"/><rect x="962.38" y="391.25" width="13.90" height="164.95" fill="#0b0b0d"/><path d="M962.88 394.18 L962.88 393.12 Q962.88 392.05 964.59 392.05 L974.07 392.05 Q975.78 392.05 975.78 393.12 L975.78 394.18 Z" fill="#8f8f91"/><rect x="962.88" y="395.58" width="12.90" height="13.27" fill="#bac8e2"/><rect x="962.88" y="410.26" width="12.90" height="134.94" fill="#7ba8d0"/><rect x="962.88" y="546.40" width="12.90" height="4.60" fill="#fde14c"/><path d="M962.88 552.40 L975.78 552.40 L975.78 554.00 Q975.78 555.60 973.22 555.60 L965.44 555.60 Q962.88 555.60 962.88 554.00 Z" fill="#e3323a"/><rect x="976.79" y="403.55" width="13.90" height="152.65" fill="#0b0b0d"/><path d="M977.29 406.76 L977.29 405.55 Q977.29 404.35 979.22 404.35 L988.26 404.35 Q990.19 404.35 990.19 405.55 L990.19 406.76 Z" fill="#8f8f91"/><rect x="977.29" y="408.16" width="12.90" height="12.43" fill="#bac8e2"/><rect x="977.29" y="421.99" width="12.90" height="123.21" fill="#7ba8d0"/><rect x="977.29" y="546.40" width="12.90" height="4.60" fill="#fde14c"/><path d="M977.29 552.40 L990.19 552.40 L990.19 554.00 Q990.19 555.60 987.63 555.60 L979.85 555.60 Q977.29 555.60 977.29 554.00 Z" fill="#e3323a"/><rect x="991.20" y="385.38" width="13.90" height="170.82" fill="#0b0b0d"/><path d="M991.70 388.87 L991.70 387.53 Q991.70 386.18 993.86 386.18 L1002.45 386.18 Q1004.60 386.18 1004.60 387.53 L1004.60 388.87 Z" fill="#8f8f91"/><rect x="991.70" y="390.27" width="12.90" height="14.95" fill="#bac8e2"/><rect x="991.70" y="406.62" width="12.90" height="138.58" fill="#7ba8d0"/><rect x="991.70" y="545.70" width="12.90" height="5.30" fill="#fde14c"/><path d="M991.70 552.40 L1004.60 552.40 L1004.60 554.00 Q1004.60 555.60 1002.04 555.60 L994.26 555.60 Q991.70 555.60 991.70 554.00 Z" fill="#e3323a"/><rect x="1005.61" y="400.05" width="13.90" height="156.15" fill="#0b0b0d"/><path d="M1006.11 403.55 L1006.11 402.20 Q1006.11 400.85 1008.27 400.85 L1016.86 400.85 Q1019.01 400.85 1019.01 402.20 L1019.01 403.55 Z" fill="#8f8f91"/><rect x="1006.11" y="404.95" width="12.90" height="13.27" fill="#bac8e2"/><rect x="1006.11" y="419.62" width="12.90" height="125.58" fill="#7ba8d0"/><rect x="1006.11" y="547.10" width="12.90" height="3.90" fill="#fde14c"/><path d="M1006.11 552.40 L1019.01 552.40 L1019.01 554.00 Q1019.01 555.60 1016.45 555.60 L1008.67 555.60 Q1006.11 555.60 1006.11 554.00 Z" fill="#e3323a"/><rect x="1020.02" y="395.44" width="13.90" height="160.76" fill="#0b0b0d"/><path d="M1020.52 398.24 L1020.52 397.24 Q1020.52 396.24 1022.12 396.24 L1031.82 396.24 Q1033.42 396.24 1033.42 397.24 L1033.42 398.24 Z" fill="#8f8f91"/><rect x="1020.52" y="399.64" width="12.90" height="13.41" fill="#bac8e2"/><rect x="1020.52" y="414.45" width="12.90" height="130.75" fill="#7ba8d0"/><rect x="1020.52" y="546.40" width="12.90" height="4.60" fill="#fde14c"/><path d="M1020.52 552.40 L1033.42 552.40 L1033.42 554.00 Q1033.42 555.60 1030.86 555.60 L1023.08 555.60 Q1020.52 555.60 1020.52 554.00 Z" fill="#e3323a"/><rect x="1034.43" y="393.07" width="13.90" height="163.13" fill="#0b0b0d"/><path d="M1034.93 396.28 L1034.93 395.07 Q1034.93 393.87 1036.86 393.87 L1045.90 393.87 Q1047.83 393.87 1047.83 395.07 L1047.83 396.28 Z" fill="#8f8f91"/><rect x="1034.93" y="397.68" width="12.90" height="13.97" fill="#bac8e2"/><rect x="1034.93" y="413.05" width="12.90" height="132.15" fill="#7ba8d0"/><rect x="1034.93" y="546.40" width="12.90" height="4.60" fill="#fde14c"/><path d="M1034.93 552.40 L1047.83 552.40 L1047.83 554.00 Q1047.83 555.60 1045.27 555.60 L1037.49 555.60 Q1034.93 555.60 1034.93 554.00 Z" fill="#e3323a"/><rect x="1048.84" y="392.09" width="13.90" height="164.11" fill="#0b0b0d"/><path d="M1049.34 395.44 L1049.34 394.16 Q1049.34 392.89 1051.38 392.89 L1060.20 392.89 Q1062.24 392.89 1062.24 394.16 L1062.24 395.44 Z" fill="#8f8f91"/><rect x="1049.34" y="396.84" width="12.90" height="13.97" fill="#bac8e2"/><rect x="1049.34" y="412.21" width="12.90" height="132.99" fill="#7ba8d0"/><rect x="1049.34" y="546.40" width="12.90" height="4.60" fill="#fde14c"/><path d="M1049.34 552.40 L1062.24 552.40 L1062.24 554.00 Q1062.24 555.60 1059.68 555.60 L1051.90 555.60 Q1049.34 555.60 1049.34 554.00 Z" fill="#e3323a"/><rect x="1063.25" y="392.09" width="13.90" height="164.11" fill="#0b0b0d"/><path d="M1063.75 395.44 L1063.75 394.16 Q1063.75 392.89 1065.79 392.89 L1074.61 392.89 Q1076.65 392.89 1076.65 394.16 L1076.65 395.44 Z" fill="#8f8f91"/><rect x="1063.75" y="396.84" width="12.90" height="13.41" fill="#bac8e2"/><rect x="1063.75" y="411.65" width="12.90" height="133.55" fill="#7ba8d0"/><rect x="1063.75" y="546.40" width="12.90" height="4.60" fill="#fde14c"/><path d="M1063.75 552.40 L1076.65 552.40 L1076.65 554.00 Q1076.65 555.60 1074.09 555.60 L1066.31 555.60 Q1063.75 555.60 1063.75 554.00 Z" fill="#e3323a"/><rect x="1077.66" y="396.84" width="13.90" height="159.36" fill="#0b0b0d"/><path d="M1078.16 399.77 L1078.16 398.71 Q1078.16 397.64 1079.87 397.64 L1089.35 397.64 Q1091.06 397.64 1091.06 398.71 L1091.06 399.77 Z" fill="#8f8f91"/><rect x="1078.16" y="401.17" width="12.90" height="12.85" fill="#bac8e2"/><rect x="1078.16" y="415.43" width="12.90" height="129.77" fill="#7ba8d0"/><rect x="1078.16" y="547.10" width="12.90" height="3.90" fill="#fde14c"/><path d="M1078.16 552.40 L1091.06 552.40 L1091.06 554.00 Q1091.06 555.60 1088.50 555.60 L1080.72 555.60 Q1078.16 555.60 1078.16 554.00 Z" fill="#e3323a"/><rect x="1092.07" y="395.44" width="13.90" height="160.76" fill="#0b0b0d"/><path d="M1092.57 398.66 L1092.57 397.45 Q1092.57 396.24 1094.50 396.24 L1103.54 396.24 Q1105.47 396.24 1105.47 397.45 L1105.47 398.66 Z" fill="#8f8f91"/><rect x="1092.57" y="400.06" width="12.90" height="13.55" fill="#bac8e2"/><rect x="1092.57" y="415.01" width="12.90" height="130.19" fill="#7ba8d0"/><rect x="1092.57" y="545.70" width="12.90" height="5.30" fill="#fde14c"/><path d="M1092.57 552.40 L1105.47 552.40 L1105.47 554.00 Q1105.47 555.60 1102.91 555.60 L1095.13 555.60 Q1092.57 555.60 1092.57 554.00 Z" fill="#e3323a"/><rect x="1106.48" y="391.25" width="13.90" height="164.95" fill="#0b0b0d"/><path d="M1106.98 394.46 L1106.98 393.26 Q1106.98 392.05 1108.91 392.05 L1117.95 392.05 Q1119.88 392.05 1119.88 393.26 L1119.88 394.46 Z" fill="#8f8f91"/><rect x="1106.98" y="395.86" width="12.90" height="13.55" fill="#bac8e2"/><rect x="1106.98" y="410.82" width="12.90" height="134.38" fill="#7ba8d0"/><rect x="1106.98" y="546.40" width="12.90" height="4.60" fill="#fde14c"/><path d="M1106.98 552.40 L1119.88 552.40 L1119.88 554.00 Q1119.88 555.60 1117.32 555.60 L1109.54 555.60 Q1106.98 555.60 1106.98 554.00 Z" fill="#e3323a"/><rect x="1120.89" y="391.25" width="13.90" height="164.95" fill="#0b0b0d"/><path d="M1121.39 394.46 L1121.39 393.26 Q1121.39 392.05 1123.32 392.05 L1132.36 392.05 Q1134.29 392.05 1134.29 393.26 L1134.29 394.46 Z" fill="#8f8f91"/><rect x="1121.39" y="395.86" width="12.90" height="13.97" fill="#bac8e2"/><rect x="1121.39" y="411.23" width="12.90" height="133.97" fill="#7ba8d0"/><rect x="1121.39" y="546.40" width="12.90" height="4.60" fill="#fde14c"/><path d="M1121.39 552.40 L1134.29 552.40 L1134.29 554.00 Q1134.29 555.60 1131.73 555.60 L1123.95 555.60 Q1121.39 555.60 1121.39 554.00 Z" fill="#e3323a"/><rect x="1135.30" y="385.10" width="13.90" height="171.10" fill="#0b0b0d"/><path d="M1135.80 388.17 L1135.80 387.04 Q1135.80 385.90 1137.62 385.90 L1146.88 385.90 Q1148.70 385.90 1148.70 387.04 L1148.70 388.17 Z" fill="#8f8f91"/><rect x="1135.80" y="389.57" width="12.90" height="15.65" fill="#bac8e2"/><rect x="1135.80" y="406.62" width="12.90" height="138.58" fill="#7ba8d0"/><rect x="1135.80" y="546.40" width="12.90" height="4.60" fill="#fde14c"/><path d="M1135.80 552.40 L1148.70 552.40 L1148.70 554.00 Q1148.70 555.60 1146.14 555.60 L1138.36 555.60 Q1135.80 555.60 1135.80 554.00 Z" fill="#e3323a"/><rect x="1149.71" y="393.76" width="13.90" height="162.44" fill="#0b0b0d"/><path d="M1150.21 396.84 L1150.21 395.70 Q1150.21 394.56 1152.03 394.56 L1161.29 394.56 Q1163.11 394.56 1163.11 395.70 L1163.11 396.84 Z" fill="#8f8f91"/><rect x="1150.21" y="398.24" width="12.90" height="13.69" fill="#bac8e2"/><rect x="1150.21" y="413.33" width="12.90" height="131.87" fill="#7ba8d0"/><rect x="1150.21" y="547.10" width="12.90" height="3.90" fill="#fde14c"/><path d="M1150.21 552.40 L1163.11 552.40 L1163.11 554.00 Q1163.11 555.60 1160.55 555.60 L1152.77 555.60 Q1150.21 555.60 1150.21 554.00 Z" fill="#e3323a"/><rect x="1164.12" y="392.09" width="13.90" height="164.11" fill="#0b0b0d"/><path d="M1164.62 394.88 L1164.62 393.88 Q1164.62 392.89 1166.21 392.89 L1175.92 392.89 Q1177.52 392.89 1177.52 393.88 L1177.52 394.88 Z" fill="#8f8f91"/><rect x="1164.62" y="396.28" width="12.90" height="12.85" fill="#bac8e2"/><rect x="1164.62" y="410.54" width="12.90" height="134.66" fill="#7ba8d0"/><rect x="1164.62" y="546.40" width="12.90" height="4.60" fill="#fde14c"/><path d="M1164.62 552.40 L1177.52 552.40 L1177.52 554.00 Q1177.52 555.60 1174.96 555.60 L1167.18 555.60 Q1164.62 555.60 1164.62 554.00 Z" fill="#e3323a"/><rect x="1178.53" y="387.20" width="13.90" height="169.00" fill="#0b0b0d"/><path d="M1179.03 390.69 L1179.03 389.34 Q1179.03 388.00 1181.18 388.00 L1189.77 388.00 Q1191.93 388.00 1191.93 389.34 L1191.93 390.69 Z" fill="#8f8f91"/><rect x="1179.03" y="392.09" width="12.90" height="14.25" fill="#bac8e2"/><rect x="1179.03" y="407.74" width="12.90" height="137.46" fill="#7ba8d0"/><rect x="1179.03" y="546.40" width="12.90" height="4.60" fill="#fde14c"/><path d="M1179.03 552.40 L1191.93 552.40 L1191.93 554.00 Q1191.93 555.60 1189.37 555.60 L1181.59 555.60 Q1179.03 555.60 1179.03 554.00 Z" fill="#e3323a"/><rect x="1192.94" y="402.15" width="13.90" height="154.05" fill="#0b0b0d"/><path d="M1193.44 405.22 L1193.44 404.09 Q1193.44 402.95 1195.26 402.95 L1204.52 402.95 Q1206.34 402.95 1206.34 404.09 L1206.34 405.22 Z" fill="#8f8f91"/><rect x="1193.44" y="406.62" width="12.90" height="13.69" fill="#bac8e2"/><rect x="1193.44" y="421.72" width="12.90" height="123.48" fill="#7ba8d0"/><rect x="1193.44" y="545.70" width="12.90" height="5.30" fill="#fde14c"/><path d="M1193.44 552.40 L1206.34 552.40 L1206.34 554.00 Q1206.34 555.60 1203.78 555.60 L1196.00 555.60 Q1193.44 555.60 1193.44 554.00 Z" fill="#e3323a"/><rect x="1207.35" y="411.23" width="13.90" height="144.97" fill="#0b0b0d"/><path d="M1207.85 414.45 L1207.85 413.24 Q1207.85 412.03 1209.78 412.03 L1218.82 412.03 Q1220.75 412.03 1220.75 413.24 L1220.75 414.45 Z" fill="#8f8f91"/><rect x="1207.85" y="415.85" width="12.90" height="12.16" fill="#bac8e2"/><rect x="1207.85" y="429.40" width="12.90" height="115.80" fill="#7ba8d0"/><rect x="1207.85" y="546.40" width="12.90" height="4.60" fill="#fde14c"/><path d="M1207.85 552.40 L1220.75 552.40 L1220.75 554.00 Q1220.75 555.60 1218.19 555.60 L1210.41 555.60 Q1207.85 555.60 1207.85 554.00 Z" fill="#e3323a"/><rect x="1221.76" y="407.74" width="13.90" height="148.46" fill="#0b0b0d"/><path d="M1222.26 410.81 L1222.26 409.68 Q1222.26 408.54 1224.08 408.54 L1233.34 408.54 Q1235.16 408.54 1235.16 409.68 L1235.16 410.81 Z" fill="#8f8f91"/><rect x="1222.26" y="412.21" width="12.90" height="12.99" fill="#bac8e2"/><rect x="1222.26" y="426.61" width="12.90" height="118.59" fill="#7ba8d0"/><rect x="1222.26" y="547.10" width="12.90" height="3.90" fill="#fde14c"/><path d="M1222.26 552.40 L1235.16 552.40 L1235.16 554.00 Q1235.16 555.60 1232.60 555.60 L1224.82 555.60 Q1222.26 555.60 1222.26 554.00 Z" fill="#e3323a"/><rect x="1236.17" y="401.17" width="13.90" height="155.03" fill="#0b0b0d"/><path d="M1236.67 404.24 L1236.67 403.11 Q1236.67 401.97 1238.49 401.97 L1247.75 401.97 Q1249.57 401.97 1249.57 403.11 L1249.57 404.24 Z" fill="#8f8f91"/><rect x="1236.67" y="405.64" width="12.90" height="12.57" fill="#bac8e2"/><rect x="1236.67" y="419.62" width="12.90" height="125.58" fill="#7ba8d0"/><rect x="1236.67" y="546.40" width="12.90" height="4.60" fill="#fde14c"/><path d="M1236.67 552.40 L1249.57 552.40 L1249.57 554.00 Q1249.57 555.60 1247.01 555.60 L1239.23 555.60 Q1236.67 555.60 1236.67 554.00 Z" fill="#e3323a"/><rect x="1250.58" y="381.89" width="13.90" height="174.31" fill="#0b0b0d"/><path d="M1251.08 385.38 L1251.08 384.03 Q1251.08 382.69 1253.23 382.69 L1261.82 382.69 Q1263.98 382.69 1263.98 384.03 L1263.98 385.38 Z" fill="#8f8f91"/><rect x="1251.08" y="386.78" width="12.90" height="14.67" fill="#bac8e2"/><rect x="1251.08" y="402.85" width="12.90" height="142.35" fill="#7ba8d0"/><rect x="1251.08" y="546.40" width="12.90" height="4.60" fill="#fde14c"/><path d="M1251.08 552.40 L1263.98 552.40 L1263.98 554.00 Q1263.98 555.60 1261.42 555.60 L1253.64 555.60 Q1251.08 555.60 1251.08 554.00 Z" fill="#e3323a"/><rect x="1264.99" y="401.45" width="13.90" height="154.75" fill="#0b0b0d"/><path d="M1265.49 404.66 L1265.49 403.46 Q1265.49 402.25 1267.42 402.25 L1276.45 402.25 Q1278.39 402.25 1278.39 403.46 L1278.39 404.66 Z" fill="#8f8f91"/><rect x="1265.49" y="406.06" width="12.90" height="12.85" fill="#bac8e2"/><rect x="1265.49" y="420.32" width="12.90" height="124.88" fill="#7ba8d0"/><rect x="1265.49" y="546.40" width="12.90" height="4.60" fill="#fde14c"/><path d="M1265.49 552.40 L1278.39 552.40 L1278.39 554.00 Q1278.39 555.60 1275.83 555.60 L1268.05 555.60 Q1265.49 555.60 1265.49 554.00 Z" fill="#e3323a"/><rect x="1279.40" y="394.46" width="13.90" height="161.74" fill="#0b0b0d"/><path d="M1279.90 397.26 L1279.90 396.26 Q1279.90 395.26 1281.49 395.26 L1291.20 395.26 Q1292.80 395.26 1292.80 396.26 L1292.80 397.26 Z" fill="#8f8f91"/><rect x="1279.90" y="398.66" width="12.90" height="14.67" fill="#bac8e2"/><rect x="1279.90" y="414.73" width="12.90" height="130.47" fill="#7ba8d0"/><rect x="1279.90" y="546.40" width="12.90" height="4.60" fill="#fde14c"/><path d="M1279.90 552.40 L1292.80 552.40 L1292.80 554.00 Q1292.80 555.60 1290.24 555.60 L1282.46 555.60 Q1279.90 555.60 1279.90 554.00 Z" fill="#e3323a"/><rect x="1293.81" y="399.63" width="13.90" height="156.57" fill="#0b0b0d"/><path d="M1294.31 402.15 L1294.31 401.29 Q1294.31 400.43 1295.68 400.43 L1305.83 400.43 Q1307.21 400.43 1307.21 401.29 L1307.21 402.15 Z" fill="#8f8f91"/><rect x="1294.31" y="403.55" width="12.90" height="12.85" fill="#bac8e2"/><rect x="1294.31" y="417.80" width="12.90" height="127.40" fill="#7ba8d0"/><rect x="1294.31" y="546.40" width="12.90" height="4.60" fill="#fde14c"/><path d="M1294.31 552.40 L1307.21 552.40 L1307.21 554.00 Q1307.21 555.60 1304.65 555.60 L1296.87 555.60 Q1294.31 555.60 1294.31 554.00 Z" fill="#e3323a"/><rect x="1308.22" y="408.44" width="13.90" height="147.76" fill="#0b0b0d"/><path d="M1308.72 411.65 L1308.72 410.44 Q1308.72 409.24 1310.65 409.24 L1319.68 409.24 Q1321.62 409.24 1321.62 410.44 L1321.62 411.65 Z" fill="#8f8f91"/><rect x="1308.72" y="413.05" width="12.90" height="12.57" fill="#bac8e2"/><rect x="1308.72" y="427.03" width="12.90" height="118.17" fill="#7ba8d0"/><rect x="1308.72" y="546.40" width="12.90" height="4.60" fill="#fde14c"/><path d="M1308.72 552.40 L1321.62 552.40 L1321.62 554.00 Q1321.62 555.60 1319.06 555.60 L1311.28 555.60 Q1308.72 555.60 1308.72 554.00 Z" fill="#e3323a"/><rect x="1322.62" y="410.81" width="13.90" height="145.39" fill="#0b0b0d"/><path d="M1323.12 413.75 L1323.12 412.68 Q1323.12 411.61 1324.83 411.61 L1334.32 411.61 Q1336.03 411.61 1336.03 412.68 L1336.03 413.75 Z" fill="#8f8f91"/><rect x="1323.12" y="415.15" width="12.90" height="12.85" fill="#bac8e2"/><rect x="1323.12" y="429.40" width="12.90" height="115.80" fill="#7ba8d0"/><rect x="1323.12" y="546.40" width="12.90" height="4.60" fill="#fde14c"/><path d="M1323.12 552.40 L1336.03 552.40 L1336.03 554.00 Q1336.03 555.60 1333.47 555.60 L1325.68 555.60 Q1323.12 555.60 1323.12 554.00 Z" fill="#e3323a"/><rect x="1337.03" y="388.45" width="13.90" height="167.75" fill="#0b0b0d"/><path d="M1337.53 391.67 L1337.53 390.46 Q1337.53 389.25 1339.47 389.25 L1348.50 389.25 Q1350.43 389.25 1350.43 390.46 L1350.43 391.67 Z" fill="#8f8f91"/><rect x="1337.53" y="393.07" width="12.90" height="13.55" fill="#bac8e2"/><rect x="1337.53" y="408.02" width="12.90" height="137.18" fill="#7ba8d0"/><rect x="1337.53" y="546.40" width="12.90" height="4.60" fill="#fde14c"/><path d="M1337.53 552.40 L1350.43 552.40 L1350.43 554.00 Q1350.43 555.60 1347.87 555.60 L1340.09 555.60 Q1337.53 555.60 1337.53 554.00 Z" fill="#e3323a"/><rect x="1351.44" y="405.64" width="13.90" height="150.56" fill="#0b0b0d"/><path d="M1351.94 408.86 L1351.94 407.65 Q1351.94 406.44 1353.88 406.44 L1362.91 406.44 Q1364.84 406.44 1364.84 407.65 L1364.84 408.86 Z" fill="#8f8f91"/><rect x="1351.94" y="410.26" width="12.90" height="12.16" fill="#bac8e2"/><rect x="1351.94" y="423.81" width="12.90" height="121.39" fill="#7ba8d0"/><rect x="1351.94" y="546.40" width="12.90" height="4.60" fill="#fde14c"/><path d="M1351.94 552.40 L1364.84 552.40 L1364.84 554.00 Q1364.84 555.60 1362.28 555.60 L1354.50 555.60 Q1351.94 555.60 1351.94 554.00 Z" fill="#e3323a"/><rect x="1365.85" y="394.88" width="13.90" height="161.32" fill="#0b0b0d"/><path d="M1366.35 397.96 L1366.35 396.82 Q1366.35 395.68 1368.17 395.68 L1377.43 395.68 Q1379.25 395.68 1379.25 396.82 L1379.25 397.96 Z" fill="#8f8f91"/><rect x="1366.35" y="399.36" width="12.90" height="13.27" fill="#bac8e2"/><rect x="1366.35" y="414.03" width="12.90" height="131.17" fill="#7ba8d0"/><rect x="1366.35" y="547.10" width="12.90" height="3.90" fill="#fde14c"/><path d="M1366.35 552.40 L1379.25 552.40 L1379.25 554.00 Q1379.25 555.60 1376.69 555.60 L1368.91 555.60 Q1366.35 555.60 1366.35 554.00 Z" fill="#e3323a"/><rect x="1380.26" y="404.94" width="13.90" height="151.26" fill="#0b0b0d"/><path d="M1380.76 407.74 L1380.76 406.74 Q1380.76 405.74 1382.36 405.74 L1392.07 405.74 Q1393.66 405.74 1393.66 406.74 L1393.66 407.74 Z" fill="#8f8f91"/><rect x="1380.76" y="409.14" width="12.90" height="13.27" fill="#bac8e2"/><rect x="1380.76" y="423.81" width="12.90" height="121.39" fill="#7ba8d0"/><rect x="1380.76" y="546.40" width="12.90" height="4.60" fill="#fde14c"/><path d="M1380.76 552.40 L1393.66 552.40 L1393.66 554.00 Q1393.66 555.60 1391.10 555.60 L1383.32 555.60 Q1380.76 555.60 1380.76 554.00 Z" fill="#e3323a"/><rect x="1394.67" y="388.87" width="13.90" height="167.33" fill="#0b0b0d"/><path d="M1395.17 392.09 L1395.17 390.88 Q1395.17 389.67 1397.10 389.67 L1406.14 389.67 Q1408.07 389.67 1408.07 390.88 L1408.07 392.09 Z" fill="#8f8f91"/><rect x="1395.17" y="393.49" width="12.90" height="14.95" fill="#bac8e2"/><rect x="1395.17" y="409.84" width="12.90" height="135.36" fill="#7ba8d0"/><rect x="1395.17" y="545.70" width="12.90" height="5.30" fill="#fde14c"/><path d="M1395.17 552.40 L1408.07 552.40 L1408.07 554.00 Q1408.07 555.60 1405.51 555.60 L1397.73 555.60 Q1395.17 555.60 1395.17 554.00 Z" fill="#e3323a"/><rect x="1409.08" y="396.56" width="13.90" height="159.64" fill="#0b0b0d"/><path d="M1409.58 399.77 L1409.58 398.57 Q1409.58 397.36 1411.51 397.36 L1420.55 397.36 Q1422.48 397.36 1422.48 398.57 L1422.48 399.77 Z" fill="#8f8f91"/><rect x="1409.58" y="401.17" width="12.90" height="14.67" fill="#bac8e2"/><rect x="1409.58" y="417.24" width="12.90" height="127.96" fill="#7ba8d0"/><rect x="1409.58" y="546.40" width="12.90" height="4.60" fill="#fde14c"/><path d="M1409.58 552.40 L1422.48 552.40 L1422.48 554.00 Q1422.48 555.60 1419.92 555.60 L1412.14 555.60 Q1409.58 555.60 1409.58 554.00 Z" fill="#e3323a"/><rect x="1423.49" y="396.56" width="13.90" height="159.64" fill="#0b0b0d"/><path d="M1423.99 399.77 L1423.99 398.57 Q1423.99 397.36 1425.92 397.36 L1434.96 397.36 Q1436.89 397.36 1436.89 398.57 L1436.89 399.77 Z" fill="#8f8f91"/><rect x="1423.99" y="401.17" width="12.90" height="12.85" fill="#bac8e2"/><rect x="1423.99" y="415.43" width="12.90" height="129.77" fill="#7ba8d0"/><rect x="1423.99" y="546.40" width="12.90" height="4.60" fill="#fde14c"/><path d="M1423.99 552.40 L1436.89 552.40 L1436.89 554.00 Q1436.89 555.60 1434.33 555.60 L1426.55 555.60 Q1423.99 555.60 1423.99 554.00 Z" fill="#e3323a"/><rect x="1437.90" y="403.55" width="13.90" height="152.65" fill="#0b0b0d"/><path d="M1438.40 406.06 L1438.40 405.20 Q1438.40 404.35 1439.78 404.35 L1449.93 404.35 Q1451.30 404.35 1451.30 405.20 L1451.30 406.06 Z" fill="#8f8f91"/><rect x="1438.40" y="407.46" width="12.90" height="13.55" fill="#bac8e2"/><rect x="1438.40" y="422.41" width="12.90" height="122.79" fill="#7ba8d0"/><rect x="1438.40" y="547.10" width="12.90" height="3.90" fill="#fde14c"/><path d="M1438.40 552.40 L1451.30 552.40 L1451.30 554.00 Q1451.30 555.60 1448.74 555.60 L1440.96 555.60 Q1438.40 555.60 1438.40 554.00 Z" fill="#e3323a"/><rect x="1452.31" y="387.20" width="13.90" height="169.00" fill="#0b0b0d"/><path d="M1452.81 390.27 L1452.81 389.13 Q1452.81 388.00 1454.63 388.00 L1463.89 388.00 Q1465.71 388.00 1465.71 389.13 L1465.71 390.27 Z" fill="#8f8f91"/><rect x="1452.81" y="391.67" width="12.90" height="13.97" fill="#bac8e2"/><rect x="1452.81" y="407.04" width="12.90" height="138.16" fill="#7ba8d0"/><rect x="1452.81" y="546.40" width="12.90" height="4.60" fill="#fde14c"/><path d="M1452.81 552.40 L1465.71 552.40 L1465.71 554.00 Q1465.71 555.60 1463.15 555.60 L1455.37 555.60 Q1452.81 555.60 1452.81 554.00 Z" fill="#e3323a"/><rect x="1466.72" y="396.56" width="13.90" height="159.64" fill="#0b0b0d"/><path d="M1467.22 399.77 L1467.22 398.57 Q1467.22 397.36 1469.15 397.36 L1478.19 397.36 Q1480.12 397.36 1480.12 398.57 L1480.12 399.77 Z" fill="#8f8f91"/><rect x="1467.22" y="401.17" width="12.90" height="13.55" fill="#bac8e2"/><rect x="1467.22" y="416.13" width="12.90" height="129.07" fill="#7ba8d0"/><rect x="1467.22" y="546.40" width="12.90" height="4.60" fill="#fde14c"/><path d="M1467.22 552.40 L1480.12 552.40 L1480.12 554.00 Q1480.12 555.60 1477.56 555.60 L1469.78 555.60 Q1467.22 555.60 1467.22 554.00 Z" fill="#e3323a"/><rect x="1481.13" y="392.37" width="13.90" height="163.83" fill="#0b0b0d"/><path d="M1481.63 395.58 L1481.63 394.37 Q1481.63 393.17 1483.56 393.17 L1492.60 393.17 Q1494.53 393.17 1494.53 394.37 L1494.53 395.58 Z" fill="#8f8f91"/><rect x="1481.63" y="396.98" width="12.90" height="12.57" fill="#bac8e2"/><rect x="1481.63" y="410.95" width="12.90" height="134.25" fill="#7ba8d0"/><rect x="1481.63" y="546.40" width="12.90" height="4.60" fill="#fde14c"/><path d="M1481.63 552.40 L1494.53 552.40 L1494.53 554.00 Q1494.53 555.60 1491.97 555.60 L1484.19 555.60 Q1481.63 555.60 1481.63 554.00 Z" fill="#e3323a"/><rect x="1495.54" y="403.27" width="13.90" height="152.93" fill="#0b0b0d"/><path d="M1496.04 406.06 L1496.04 405.06 Q1496.04 404.07 1497.64 404.07 L1507.35 404.07 Q1508.94 404.07 1508.94 405.06 L1508.94 406.06 Z" fill="#8f8f91"/><rect x="1496.04" y="407.46" width="12.90" height="12.85" fill="#bac8e2"/><rect x="1496.04" y="421.72" width="12.90" height="123.48" fill="#7ba8d0"/><rect x="1496.04" y="545.70" width="12.90" height="5.30" fill="#fde14c"/><path d="M1496.04 552.40 L1508.94 552.40 L1508.94 554.00 Q1508.94 555.60 1506.38 555.60 L1498.60 555.60 Q1496.04 555.60 1496.04 554.00 Z" fill="#e3323a"/><rect x="1509.95" y="391.67" width="13.90" height="164.53" fill="#0b0b0d"/><path d="M1510.45 394.88 L1510.45 393.67 Q1510.45 392.47 1512.38 392.47 L1521.42 392.47 Q1523.35 392.47 1523.35 393.67 L1523.35 394.88 Z" fill="#8f8f91"/><rect x="1510.45" y="396.28" width="12.90" height="12.85" fill="#bac8e2"/><rect x="1510.45" y="410.54" width="12.90" height="134.66" fill="#7ba8d0"/><rect x="1510.45" y="547.10" width="12.90" height="3.90" fill="#fde14c"/><path d="M1510.45 552.40 L1523.35 552.40 L1523.35 554.00 Q1523.35 555.60 1520.79 555.60 L1513.01 555.60 Q1510.45 555.60 1510.45 554.00 Z" fill="#e3323a"/><rect x="1524.36" y="394.46" width="13.90" height="161.74" fill="#0b0b0d"/><path d="M1524.86 397.54 L1524.86 396.40 Q1524.86 395.26 1526.68 395.26 L1535.94 395.26 Q1537.76 395.26 1537.76 396.40 L1537.76 397.54 Z" fill="#8f8f91"/><rect x="1524.86" y="398.94" width="12.90" height="14.39" fill="#bac8e2"/><rect x="1524.86" y="414.73" width="12.90" height="130.47" fill="#7ba8d0"/><rect x="1524.86" y="546.40" width="12.90" height="4.60" fill="#fde14c"/><path d="M1524.86 552.40 L1537.76 552.40 L1537.76 554.00 Q1537.76 555.60 1535.20 555.60 L1527.42 555.60 Q1524.86 555.60 1524.86 554.00 Z" fill="#e3323a"/><rect x="1538.77" y="394.46" width="13.90" height="161.74" fill="#0b0b0d"/><path d="M1539.27 397.54 L1539.27 396.40 Q1539.27 395.26 1541.09 395.26 L1550.35 395.26 Q1552.17 395.26 1552.17 396.40 L1552.17 397.54 Z" fill="#8f8f91"/><rect x="1539.27" y="398.94" width="12.90" height="12.99" fill="#bac8e2"/><rect x="1539.27" y="413.33" width="12.90" height="131.87" fill="#7ba8d0"/><rect x="1539.27" y="546.40" width="12.90" height="4.60" fill="#fde14c"/><path d="M1539.27 552.40 L1552.17 552.40 L1552.17 554.00 Q1552.17 555.60 1549.61 555.60 L1541.83 555.60 Q1539.27 555.60 1539.27 554.00 Z" fill="#e3323a"/><rect x="1553.18" y="398.66" width="13.90" height="157.54" fill="#0b0b0d"/><path d="M1553.68 401.87 L1553.68 400.66 Q1553.68 399.46 1555.61 399.46 L1564.65 399.46 Q1566.58 399.46 1566.58 400.66 L1566.58 401.87 Z" fill="#8f8f91"/><rect x="1553.68" y="403.27" width="12.90" height="13.55" fill="#bac8e2"/><rect x="1553.68" y="418.22" width="12.90" height="126.98" fill="#7ba8d0"/><rect x="1553.68" y="546.40" width="12.90" height="4.60" fill="#fde14c"/><path d="M1553.68 552.40 L1566.58 552.40 L1566.58 554.00 Q1566.58 555.60 1564.02 555.60 L1556.24 555.60 Q1553.68 555.60 1553.68 554.00 Z" fill="#e3323a"/><rect x="1567.59" y="385.66" width="13.90" height="170.54" fill="#0b0b0d"/><path d="M1568.09 388.87 L1568.09 387.67 Q1568.09 386.46 1570.02 386.46 L1579.06 386.46 Q1580.99 386.46 1580.99 387.67 L1580.99 388.87 Z" fill="#8f8f91"/><rect x="1568.09" y="390.27" width="12.90" height="14.39" fill="#bac8e2"/><rect x="1568.09" y="406.06" width="12.90" height="139.14" fill="#7ba8d0"/><rect x="1568.09" y="546.40" width="12.90" height="4.60" fill="#fde14c"/><path d="M1568.09 552.40 L1580.99 552.40 L1580.99 554.00 Q1580.99 555.60 1578.43 555.60 L1570.65 555.60 Q1568.09 555.60 1568.09 554.00 Z" fill="#e3323a"/><rect x="1582.00" y="394.46" width="13.90" height="161.74" fill="#0b0b0d"/><path d="M1582.50 396.84 L1582.50 396.05 Q1582.50 395.26 1583.76 395.26 L1594.14 395.26 Q1595.40 395.26 1595.40 396.05 L1595.40 396.84 Z" fill="#8f8f91"/><rect x="1582.50" y="398.24" width="12.90" height="13.41" fill="#bac8e2"/><rect x="1582.50" y="413.05" width="12.90" height="132.15" fill="#7ba8d0"/><rect x="1582.50" y="547.10" width="12.90" height="3.90" fill="#fde14c"/><path d="M1582.50 552.40 L1595.40 552.40 L1595.40 554.00 Q1595.40 555.60 1592.84 555.60 L1585.06 555.60 Q1582.50 555.60 1582.50 554.00 Z" fill="#e3323a"/><rect x="1596.41" y="392.37" width="13.90" height="163.83" fill="#0b0b0d"/><path d="M1596.91 395.44 L1596.91 394.30 Q1596.91 393.17 1598.73 393.17 L1607.99 393.17 Q1609.81 393.17 1609.81 394.30 L1609.81 395.44 Z" fill="#8f8f91"/><rect x="1596.91" y="396.84" width="12.90" height="13.97" fill="#bac8e2"/><rect x="1596.91" y="412.21" width="12.90" height="132.99" fill="#7ba8d0"/><rect x="1596.91" y="545.70" width="12.90" height="5.30" fill="#fde14c"/><path d="M1596.91 552.40 L1609.81 552.40 L1609.81 554.00 Q1609.81 555.60 1607.25 555.60 L1599.47 555.60 Q1596.91 555.60 1596.91 554.00 Z" fill="#e3323a"/><rect x="1610.82" y="391.67" width="13.90" height="164.53" fill="#0b0b0d"/><path d="M1611.32 394.46 L1611.32 393.47 Q1611.32 392.47 1612.92 392.47 L1622.62 392.47 Q1624.22 392.47 1624.22 393.47 L1624.22 394.46 Z" fill="#8f8f91"/><rect x="1611.32" y="395.86" width="12.90" height="14.39" fill="#bac8e2"/><rect x="1611.32" y="411.65" width="12.90" height="133.55" fill="#7ba8d0"/><rect x="1611.32" y="546.40" width="12.90" height="4.60" fill="#fde14c"/><path d="M1611.32 552.40 L1624.22 552.40 L1624.22 554.00 Q1624.22 555.60 1621.66 555.60 L1613.88 555.60 Q1611.32 555.60 1611.32 554.00 Z" fill="#e3323a"/><rect x="1625.23" y="406.06" width="13.90" height="150.14" fill="#0b0b0d"/><path d="M1625.73 409.14 L1625.73 408.00 Q1625.73 406.86 1627.55 406.86 L1636.81 406.86 Q1638.63 406.86 1638.63 408.00 L1638.63 409.14 Z" fill="#8f8f91"/><rect x="1625.73" y="410.54" width="12.90" height="12.85" fill="#bac8e2"/><rect x="1625.73" y="424.79" width="12.90" height="120.41" fill="#7ba8d0"/><rect x="1625.73" y="546.40" width="12.90" height="4.60" fill="#fde14c"/><path d="M1625.73 552.40 L1638.63 552.40 L1638.63 554.00 Q1638.63 555.60 1636.07 555.60 L1628.29 555.60 Q1625.73 555.60 1625.73 554.00 Z" fill="#e3323a"/><rect x="1639.64" y="399.63" width="13.90" height="156.57" fill="#0b0b0d"/><path d="M1640.14 402.15 L1640.14 401.29 Q1640.14 400.43 1641.51 400.43 L1651.67 400.43 Q1653.04 400.43 1653.04 401.29 L1653.04 402.15 Z" fill="#8f8f91"/><rect x="1640.14" y="403.55" width="12.90" height="15.09" fill="#bac8e2"/><rect x="1640.14" y="420.04" width="12.90" height="125.16" fill="#7ba8d0"/><rect x="1640.14" y="546.40" width="12.90" height="4.60" fill="#fde14c"/><path d="M1640.14 552.40 L1653.04 552.40 L1653.04 554.00 Q1653.04 555.60 1650.48 555.60 L1642.70 555.60 Q1640.14 555.60 1640.14 554.00 Z" fill="#e3323a"/><rect x="1654.05" y="393.76" width="13.90" height="162.44" fill="#0b0b0d"/><path d="M1654.55 396.98 L1654.55 395.77 Q1654.55 394.56 1656.48 394.56 L1665.52 394.56 Q1667.45 394.56 1667.45 395.77 L1667.45 396.98 Z" fill="#8f8f91"/><rect x="1654.55" y="398.38" width="12.90" height="13.27" fill="#bac8e2"/><rect x="1654.55" y="413.05" width="12.90" height="132.15" fill="#7ba8d0"/><rect x="1654.55" y="547.10" width="12.90" height="3.90" fill="#fde14c"/><path d="M1654.55 552.40 L1667.45 552.40 L1667.45 554.00 Q1667.45 555.60 1664.89 555.60 L1657.11 555.60 Q1654.55 555.60 1654.55 554.00 Z" fill="#e3323a"/><rect x="1668.46" y="398.66" width="13.90" height="157.54" fill="#0b0b0d"/><path d="M1668.96 401.45 L1668.96 400.45 Q1668.96 399.46 1670.55 399.46 L1680.26 399.46 Q1681.86 399.46 1681.86 400.45 L1681.86 401.45 Z" fill="#8f8f91"/><rect x="1668.96" y="402.85" width="12.90" height="13.27" fill="#bac8e2"/><rect x="1668.96" y="417.52" width="12.90" height="127.68" fill="#7ba8d0"/><rect x="1668.96" y="546.40" width="12.90" height="4.60" fill="#fde14c"/><path d="M1668.96 552.40 L1681.86 552.40 L1681.86 554.00 Q1681.86 555.60 1679.30 555.60 L1671.52 555.60 Q1668.96 555.60 1668.96 554.00 Z" fill="#e3323a"/><rect x="1682.87" y="400.47" width="13.90" height="155.73" fill="#0b0b0d"/><path d="M1683.37 403.55 L1683.37 402.41 Q1683.37 401.27 1685.19 401.27 L1694.45 401.27 Q1696.27 401.27 1696.27 402.41 L1696.27 403.55 Z" fill="#8f8f91"/><rect x="1683.37" y="404.95" width="12.90" height="13.97" fill="#bac8e2"/><rect x="1683.37" y="420.32" width="12.90" height="124.88" fill="#7ba8d0"/><rect x="1683.37" y="546.40" width="12.90" height="4.60" fill="#fde14c"/><path d="M1683.37 552.40 L1696.27 552.40 L1696.27 554.00 Q1696.27 555.60 1693.71 555.60 L1685.93 555.60 Q1683.37 555.60 1683.37 554.00 Z" fill="#e3323a"/><rect x="1697.28" y="385.10" width="13.90" height="171.10" fill="#0b0b0d"/><path d="M1697.78 388.17 L1697.78 387.04 Q1697.78 385.90 1699.60 385.90 L1708.86 385.90 Q1710.68 385.90 1710.68 387.04 L1710.68 388.17 Z" fill="#8f8f91"/><rect x="1697.78" y="389.57" width="12.90" height="13.97" fill="#bac8e2"/><rect x="1697.78" y="404.95" width="12.90" height="140.25" fill="#7ba8d0"/><rect x="1697.78" y="545.70" width="12.90" height="5.30" fill="#fde14c"/><path d="M1697.78 552.40 L1710.68 552.40 L1710.68 554.00 Q1710.68 555.60 1708.12 555.60 L1700.34 555.60 Q1697.78 555.60 1697.78 554.00 Z" fill="#e3323a"/><rect x="1711.69" y="397.96" width="13.90" height="158.24" fill="#0b0b0d"/><path d="M1712.19 401.03 L1712.19 399.89 Q1712.19 398.76 1714.01 398.76 L1723.27 398.76 Q1725.09 398.76 1725.09 399.89 L1725.09 401.03 Z" fill="#8f8f91"/><rect x="1712.19" y="402.43" width="12.90" height="14.81" fill="#bac8e2"/><rect x="1712.19" y="418.64" width="12.90" height="126.56" fill="#7ba8d0"/><rect x="1712.19" y="546.40" width="12.90" height="4.60" fill="#fde14c"/><path d="M1712.19 552.40 L1725.09 552.40 L1725.09 554.00 Q1725.09 555.60 1722.53 555.60 L1714.75 555.60 Q1712.19 555.60 1712.19 554.00 Z" fill="#e3323a"/><rect x="1726.10" y="385.38" width="13.90" height="170.82" fill="#0b0b0d"/><path d="M1726.60 388.87 L1726.60 387.53 Q1726.60 386.18 1728.75 386.18 L1737.34 386.18 Q1739.50 386.18 1739.50 387.53 L1739.50 388.87 Z" fill="#8f8f91"/><rect x="1726.60" y="390.27" width="12.90" height="13.55" fill="#bac8e2"/><rect x="1726.60" y="405.23" width="12.90" height="139.97" fill="#7ba8d0"/><rect x="1726.60" y="547.10" width="12.90" height="3.90" fill="#fde14c"/><path d="M1726.60 552.40 L1739.50 552.40 L1739.50 554.00 Q1739.50 555.60 1736.94 555.60 L1729.16 555.60 Q1726.60 555.60 1726.60 554.00 Z" fill="#e3323a"/><rect x="1740.51" y="393.76" width="13.90" height="162.44" fill="#0b0b0d"/><path d="M1741.01 396.84 L1741.01 395.70 Q1741.01 394.56 1742.83 394.56 L1752.09 394.56 Q1753.91 394.56 1753.91 395.70 L1753.91 396.84 Z" fill="#8f8f91"/><rect x="1741.01" y="398.24" width="12.90" height="13.41" fill="#bac8e2"/><rect x="1741.01" y="413.05" width="12.90" height="132.15" fill="#7ba8d0"/><rect x="1741.01" y="546.40" width="12.90" height="4.60" fill="#fde14c"/><path d="M1741.01 552.40 L1753.91 552.40 L1753.91 554.00 Q1753.91 555.60 1751.35 555.60 L1743.57 555.60 Q1741.01 555.60 1741.01 554.00 Z" fill="#e3323a"/><rect x="1754.92" y="386.50" width="13.90" height="169.70" fill="#0b0b0d"/><path d="M1755.42 389.85 L1755.42 388.57 Q1755.42 387.30 1757.46 387.30 L1766.27 387.30 Q1768.32 387.30 1768.32 388.57 L1768.32 389.85 Z" fill="#8f8f91"/><rect x="1755.42" y="391.25" width="12.90" height="15.79" fill="#bac8e2"/><rect x="1755.42" y="408.44" width="12.90" height="136.76" fill="#7ba8d0"/><rect x="1755.42" y="546.40" width="12.90" height="4.60" fill="#fde14c"/><path d="M1755.42 552.40 L1768.32 552.40 L1768.32 554.00 Q1768.32 555.60 1765.76 555.60 L1757.98 555.60 Q1755.42 555.60 1755.42 554.00 Z" fill="#e3323a"/><rect x="1769.33" y="404.24" width="13.90" height="151.96" fill="#0b0b0d"/><path d="M1769.83 407.46 L1769.83 406.25 Q1769.83 405.04 1771.76 405.04 L1780.80 405.04 Q1782.73 405.04 1782.73 406.25 L1782.73 407.46 Z" fill="#8f8f91"/><rect x="1769.83" y="408.86" width="12.90" height="11.46" fill="#bac8e2"/><rect x="1769.83" y="421.72" width="12.90" height="123.48" fill="#7ba8d0"/><rect x="1769.83" y="546.40" width="12.90" height="4.60" fill="#fde14c"/><path d="M1769.83 552.40 L1782.73 552.40 L1782.73 554.00 Q1782.73 555.60 1780.17 555.60 L1772.39 555.60 Q1769.83 555.60 1769.83 554.00 Z" fill="#e3323a"/><rect x="1783.74" y="407.46" width="13.90" height="148.74" fill="#0b0b0d"/><path d="M1784.24 410.53 L1784.24 409.40 Q1784.24 408.26 1786.06 408.26 L1795.32 408.26 Q1797.14 408.26 1797.14 409.40 L1797.14 410.53 Z" fill="#8f8f91"/><rect x="1784.24" y="411.93" width="12.90" height="13.69" fill="#bac8e2"/><rect x="1784.24" y="427.03" width="12.90" height="118.17" fill="#7ba8d0"/><rect x="1784.24" y="546.40" width="12.90" height="4.60" fill="#fde14c"/><path d="M1784.24 552.40 L1797.14 552.40 L1797.14 554.00 Q1797.14 555.60 1794.58 555.60 L1786.80 555.60 Q1784.24 555.60 1784.24 554.00 Z" fill="#e3323a"/><rect x="1798.15" y="394.46" width="13.90" height="161.74" fill="#0b0b0d"/><path d="M1798.65 397.68 L1798.65 396.47 Q1798.65 395.26 1800.58 395.26 L1809.61 395.26 Q1811.55 395.26 1811.55 396.47 L1811.55 397.68 Z" fill="#8f8f91"/><rect x="1798.65" y="399.08" width="12.90" height="13.97" fill="#bac8e2"/><rect x="1798.65" y="414.45" width="12.90" height="130.75" fill="#7ba8d0"/><rect x="1798.65" y="546.40" width="12.90" height="4.60" fill="#fde14c"/><path d="M1798.65 552.40 L1811.55 552.40 L1811.55 554.00 Q1811.55 555.60 1808.99 555.60 L1801.21 555.60 Q1798.65 555.60 1798.65 554.00 Z" fill="#e3323a"/><rect x="1812.56" y="408.16" width="13.90" height="148.04" fill="#0b0b0d"/><path d="M1813.06 410.81 L1813.06 409.89 Q1813.06 408.96 1814.54 408.96 L1824.47 408.96 Q1825.96 408.96 1825.96 409.89 L1825.96 410.81 Z" fill="#8f8f91"/><rect x="1813.06" y="412.21" width="12.90" height="13.41" fill="#bac8e2"/><rect x="1813.06" y="427.03" width="12.90" height="118.17" fill="#7ba8d0"/><rect x="1813.06" y="546.40" width="12.90" height="4.60" fill="#fde14c"/><path d="M1813.06 552.40 L1825.96 552.40 L1825.96 554.00 Q1825.96 555.60 1823.40 555.60 L1815.62 555.60 Q1813.06 555.60 1813.06 554.00 Z" fill="#e3323a"/><rect x="1826.97" y="407.46" width="13.90" height="148.74" fill="#0b0b0d"/><path d="M1827.47 410.81 L1827.47 409.54 Q1827.47 408.26 1829.51 408.26 L1838.32 408.26 Q1840.37 408.26 1840.37 409.54 L1840.37 410.81 Z" fill="#8f8f91"/><rect x="1827.47" y="412.21" width="12.90" height="11.18" fill="#bac8e2"/><rect x="1827.47" y="424.79" width="12.90" height="120.41" fill="#7ba8d0"/><rect x="1827.47" y="546.40" width="12.90" height="4.60" fill="#fde14c"/><path d="M1827.47 552.40 L1840.37 552.40 L1840.37 554.00 Q1840.37 555.60 1837.81 555.60 L1830.03 555.60 Q1827.47 555.60 1827.47 554.00 Z" fill="#e3323a"/><rect x="1841.38" y="400.47" width="13.90" height="155.73" fill="#0b0b0d"/><path d="M1841.88 403.55 L1841.88 402.41 Q1841.88 401.27 1843.69 401.27 L1852.96 401.27 Q1854.78 401.27 1854.78 402.41 L1854.78 403.55 Z" fill="#8f8f91"/><rect x="1841.88" y="404.95" width="12.90" height="13.97" fill="#bac8e2"/><rect x="1841.88" y="420.32" width="12.90" height="124.88" fill="#7ba8d0"/><rect x="1841.88" y="546.40" width="12.90" height="4.60" fill="#fde14c"/><path d="M1841.88 552.40 L1854.78 552.40 L1854.78 554.00 Q1854.78 555.60 1852.22 555.60 L1844.43 555.60 Q1841.88 555.60 1841.88 554.00 Z" fill="#e3323a"/><rect x="1855.78" y="415.42" width="13.90" height="140.78" fill="#0b0b0d"/><path d="M1856.28 418.64 L1856.28 417.43 Q1856.28 416.22 1858.22 416.22 L1867.25 416.22 Q1869.18 416.22 1869.18 417.43 L1869.18 418.64 Z" fill="#8f8f91"/><rect x="1856.28" y="420.04" width="12.90" height="11.74" fill="#bac8e2"/><rect x="1856.28" y="433.17" width="12.90" height="112.03" fill="#7ba8d0"/><rect x="1856.28" y="546.40" width="12.90" height="4.60" fill="#fde14c"/><path d="M1856.28 552.40 L1869.18 552.40 L1869.18 554.00 Q1869.18 555.60 1866.62 555.60 L1858.84 555.60 Q1856.28 555.60 1856.28 554.00 Z" fill="#e3323a"/><rect x="1870.19" y="407.74" width="13.90" height="148.46" fill="#0b0b0d"/><path d="M1870.69 410.81 L1870.69 409.68 Q1870.69 408.54 1872.51 408.54 L1881.77 408.54 Q1883.59 408.54 1883.59 409.68 L1883.59 410.81 Z" fill="#8f8f91"/><rect x="1870.69" y="412.21" width="12.90" height="12.57" fill="#bac8e2"/><rect x="1870.69" y="426.19" width="12.90" height="119.01" fill="#7ba8d0"/><rect x="1870.69" y="547.10" width="12.90" height="3.90" fill="#fde14c"/><path d="M1870.69 552.40 L1883.59 552.40 L1883.59 554.00 Q1883.59 555.60 1881.03 555.60 L1873.25 555.60 Q1870.69 555.60 1870.69 554.00 Z" fill="#e3323a"/><rect x="1884.60" y="398.66" width="13.90" height="157.54" fill="#0b0b0d"/><path d="M1885.10 401.45 L1885.10 400.45 Q1885.10 399.46 1886.70 399.46 L1896.41 399.46 Q1898.00 399.46 1898.00 400.45 L1898.00 401.45 Z" fill="#8f8f91"/><rect x="1885.10" y="402.85" width="12.90" height="13.69" fill="#bac8e2"/><rect x="1885.10" y="417.94" width="12.90" height="127.26" fill="#7ba8d0"/><rect x="1885.10" y="546.40" width="12.90" height="4.60" fill="#fde14c"/><path d="M1885.10 552.40 L1898.00 552.40 L1898.00 554.00 Q1898.00 555.60 1895.44 555.60 L1887.66 555.60 Q1885.10 555.60 1885.10 554.00 Z" fill="#e3323a"/><rect x="1899.01" y="401.87" width="13.90" height="154.33" fill="#0b0b0d"/><path d="M1899.51 404.94 L1899.51 403.81 Q1899.51 402.67 1901.33 402.67 L1910.59 402.67 Q1912.41 402.67 1912.41 403.81 L1912.41 404.94 Z" fill="#8f8f91"/><rect x="1899.51" y="406.34" width="12.90" height="12.99" fill="#bac8e2"/><rect x="1899.51" y="420.74" width="12.90" height="124.46" fill="#7ba8d0"/><rect x="1899.51" y="545.70" width="12.90" height="5.30" fill="#fde14c"/><path d="M1899.51 552.40 L1912.41 552.40 L1912.41 554.00 Q1912.41 555.60 1909.85 555.60 L1902.07 555.60 Q1899.51 555.60 1899.51 554.00 Z" fill="#e3323a"/><rect x="1913.42" y="393.76" width="13.90" height="162.44" fill="#0b0b0d"/><path d="M1913.92 396.84 L1913.92 395.70 Q1913.92 394.56 1915.74 394.56 L1925.00 394.56 Q1926.82 394.56 1926.82 395.70 L1926.82 396.84 Z" fill="#8f8f91"/><rect x="1913.92" y="398.24" width="12.90" height="14.39" fill="#bac8e2"/><rect x="1913.92" y="414.03" width="12.90" height="131.17" fill="#7ba8d0"/><rect x="1913.92" y="546.40" width="12.90" height="4.60" fill="#fde14c"/><path d="M1913.92 552.40 L1926.82 552.40 L1926.82 554.00 Q1926.82 555.60 1924.26 555.60 L1916.48 555.60 Q1913.92 555.60 1913.92 554.00 Z" fill="#e3323a"/><rect x="1927.83" y="404.52" width="13.90" height="151.68" fill="#0b0b0d"/><path d="M1928.33 407.46 L1928.33 406.39 Q1928.33 405.32 1930.04 405.32 L1939.53 405.32 Q1941.23 405.32 1941.23 406.39 L1941.23 407.46 Z" fill="#8f8f91"/><rect x="1928.33" y="408.86" width="12.90" height="12.16" fill="#bac8e2"/><rect x="1928.33" y="422.41" width="12.90" height="122.79" fill="#7ba8d0"/><rect x="1928.33" y="546.40" width="12.90" height="4.60" fill="#fde14c"/><path d="M1928.33 552.40 L1941.23 552.40 L1941.23 554.00 Q1941.23 555.60 1938.67 555.60 L1930.89 555.60 Q1928.33 555.60 1928.33 554.00 Z" fill="#e3323a"/><rect x="1942.24" y="397.96" width="13.90" height="158.24" fill="#0b0b0d"/><path d="M1942.74 400.75 L1942.74 399.75 Q1942.74 398.76 1944.34 398.76 L1954.05 398.76 Q1955.64 398.76 1955.64 399.75 L1955.64 400.75 Z" fill="#8f8f91"/><rect x="1942.74" y="402.15" width="12.90" height="12.57" fill="#bac8e2"/><rect x="1942.74" y="416.13" width="12.90" height="129.07" fill="#7ba8d0"/><rect x="1942.74" y="547.10" width="12.90" height="3.90" fill="#fde14c"/><path d="M1942.74 552.40 L1955.64 552.40 L1955.64 554.00 Q1955.64 555.60 1953.08 555.60 L1945.30 555.60 Q1942.74 555.60 1942.74 554.00 Z" fill="#e3323a"/><rect x="1956.65" y="383.70" width="13.90" height="172.50" fill="#0b0b0d"/><path d="M1957.15 386.78 L1957.15 385.64 Q1957.15 384.50 1958.97 384.50 L1968.23 384.50 Q1970.05 384.50 1970.05 385.64 L1970.05 386.78 Z" fill="#8f8f91"/><rect x="1957.15" y="388.18" width="12.90" height="13.97" fill="#bac8e2"/><rect x="1957.15" y="403.55" width="12.90" height="141.65" fill="#7ba8d0"/><rect x="1957.15" y="546.40" width="12.90" height="4.60" fill="#fde14c"/><path d="M1957.15 552.40 L1970.05 552.40 L1970.05 554.00 Q1970.05 555.60 1967.49 555.60 L1959.71 555.60 Q1957.15 555.60 1957.15 554.00 Z" fill="#e3323a"/><rect x="1971.06" y="409.83" width="13.90" height="146.37" fill="#0b0b0d"/><path d="M1971.56 413.05 L1971.56 411.84 Q1971.56 410.63 1973.49 410.63 L1982.53 410.63 Q1984.46 410.63 1984.46 411.84 L1984.46 413.05 Z" fill="#8f8f91"/><rect x="1971.56" y="414.45" width="12.90" height="10.76" fill="#bac8e2"/><rect x="1971.56" y="426.61" width="12.90" height="118.59" fill="#7ba8d0"/><rect x="1971.56" y="546.40" width="12.90" height="4.60" fill="#fde14c"/><path d="M1971.56 552.40 L1984.46 552.40 L1984.46 554.00 Q1984.46 555.60 1981.90 555.60 L1974.12 555.60 Q1971.56 555.60 1971.56 554.00 Z" fill="#e3323a"/><rect x="1985.47" y="398.24" width="13.90" height="157.96" fill="#0b0b0d"/><path d="M1985.97 401.45 L1985.97 400.24 Q1985.97 399.04 1987.90 399.04 L1996.94 399.04 Q1998.87 399.04 1998.87 400.24 L1998.87 401.45 Z" fill="#8f8f91"/><rect x="1985.97" y="402.85" width="12.90" height="12.57" fill="#bac8e2"/><rect x="1985.97" y="416.82" width="12.90" height="128.38" fill="#7ba8d0"/><rect x="1985.97" y="546.40" width="12.90" height="4.60" fill="#fde14c"/><path d="M1985.97 552.40 L1998.87 552.40 L1998.87 554.00 Q1998.87 555.60 1996.31 555.60 L1988.53 555.60 Q1985.97 555.60 1985.97 554.00 Z" fill="#e3323a"/><rect x="1999.88" y="405.22" width="13.90" height="150.98" fill="#0b0b0d"/><path d="M2000.38 408.16 L2000.38 407.09 Q2000.38 406.02 2002.09 406.02 L2011.57 406.02 Q2013.28 406.02 2013.28 407.09 L2013.28 408.16 Z" fill="#8f8f91"/><rect x="2000.38" y="409.56" width="12.90" height="12.85" fill="#bac8e2"/><rect x="2000.38" y="423.81" width="12.90" height="121.39" fill="#7ba8d0"/><rect x="2000.38" y="545.70" width="12.90" height="5.30" fill="#fde14c"/><path d="M2000.38 552.40 L2013.28 552.40 L2013.28 554.00 Q2013.28 555.60 2010.72 555.60 L2002.94 555.60 Q2000.38 555.60 2000.38 554.00 Z" fill="#e3323a"/><rect x="2014.29" y="394.04" width="13.90" height="162.16" fill="#0b0b0d"/><path d="M2014.79 396.98 L2014.79 395.91 Q2014.79 394.84 2016.50 394.84 L2025.98 394.84 Q2027.69 394.84 2027.69 395.91 L2027.69 396.98 Z" fill="#8f8f91"/><rect x="2014.79" y="398.38" width="12.90" height="14.25" fill="#bac8e2"/><rect x="2014.79" y="414.03" width="12.90" height="131.17" fill="#7ba8d0"/><rect x="2014.79" y="547.10" width="12.90" height="3.90" fill="#fde14c"/><path d="M2014.79 552.40 L2027.69 552.40 L2027.69 554.00 Q2027.69 555.60 2025.13 555.60 L2017.35 555.60 Q2014.79 555.60 2014.79 554.00 Z" fill="#e3323a"/><rect x="2028.70" y="393.34" width="13.90" height="162.86" fill="#0b0b0d"/><path d="M2029.20 396.28 L2029.20 395.21 Q2029.20 394.14 2030.91 394.14 L2040.39 394.14 Q2042.10 394.14 2042.10 395.21 L2042.10 396.28 Z" fill="#8f8f91"/><rect x="2029.20" y="397.68" width="12.90" height="14.95" fill="#bac8e2"/><rect x="2029.20" y="414.03" width="12.90" height="131.17" fill="#7ba8d0"/><rect x="2029.20" y="546.40" width="12.90" height="4.60" fill="#fde14c"/><path d="M2029.20 552.40 L2042.10 552.40 L2042.10 554.00 Q2042.10 555.60 2039.54 555.60 L2031.76 555.60 Q2029.20 555.60 2029.20 554.00 Z" fill="#e3323a"/><rect x="2043.11" y="384.40" width="13.90" height="171.80" fill="#0b0b0d"/><path d="M2043.61 387.76 L2043.61 386.48 Q2043.61 385.20 2045.65 385.20 L2054.47 385.20 Q2056.51 385.20 2056.51 386.48 L2056.51 387.76 Z" fill="#8f8f91"/><rect x="2043.61" y="389.16" width="12.90" height="15.09" fill="#bac8e2"/><rect x="2043.61" y="405.64" width="12.90" height="139.56" fill="#7ba8d0"/><rect x="2043.61" y="546.40" width="12.90" height="4.60" fill="#fde14c"/><path d="M2043.61 552.40 L2056.51 552.40 L2056.51 554.00 Q2056.51 555.60 2053.95 555.60 L2046.17 555.60 Q2043.61 555.60 2043.61 554.00 Z" fill="#e3323a"/><rect x="2057.52" y="401.45" width="13.90" height="154.75" fill="#0b0b0d"/><path d="M2058.02 405.64 L2058.02 403.85 Q2058.02 402.25 2060.58 402.25 L2068.36 402.25 Q2070.92 402.25 2070.92 403.85 L2070.92 405.64 Z" fill="#8f8f91"/><rect x="2058.02" y="407.04" width="12.90" height="15.37" fill="#bac8e2"/><rect x="2058.02" y="423.81" width="12.90" height="121.39" fill="#7ba8d0"/><rect x="2058.02" y="546.40" width="12.90" height="4.60" fill="#fde14c"/><path d="M2058.02 552.40 L2070.92 552.40 L2070.92 554.00 Q2070.92 555.60 2068.36 555.60 L2060.58 555.60 Q2058.02 555.60 2058.02 554.00 Z" fill="#e3323a"/><rect x="2071.93" y="391.25" width="13.90" height="164.95" fill="#0b0b0d"/><path d="M2072.43 394.46 L2072.43 393.26 Q2072.43 392.05 2074.36 392.05 L2083.40 392.05 Q2085.33 392.05 2085.33 393.26 L2085.33 394.46 Z" fill="#8f8f91"/><rect x="2072.43" y="395.86" width="12.90" height="12.57" fill="#bac8e2"/><rect x="2072.43" y="409.84" width="12.90" height="135.36" fill="#7ba8d0"/><rect x="2072.43" y="546.40" width="12.90" height="4.60" fill="#fde14c"/><path d="M2072.43 552.40 L2085.33 552.40 L2085.33 554.00 Q2085.33 555.60 2082.77 555.60 L2074.99 555.60 Q2072.43 555.60 2072.43 554.00 Z" fill="#e3323a"/><rect x="2086.34" y="390.97" width="13.90" height="165.23" fill="#0b0b0d"/><path d="M2086.84 394.04 L2086.84 392.91 Q2086.84 391.77 2088.66 391.77 L2097.92 391.77 Q2099.74 391.77 2099.74 392.91 L2099.74 394.04 Z" fill="#8f8f91"/><rect x="2086.84" y="395.44" width="12.90" height="12.99" fill="#bac8e2"/><rect x="2086.84" y="409.84" width="12.90" height="135.36" fill="#7ba8d0"/><rect x="2086.84" y="547.10" width="12.90" height="3.90" fill="#fde14c"/><path d="M2086.84 552.40 L2099.74 552.40 L2099.74 554.00 Q2099.74 555.60 2097.18 555.60 L2089.40 555.60 Q2086.84 555.60 2086.84 554.00 Z" fill="#e3323a"/><rect x="2100.75" y="399.63" width="13.90" height="156.57" fill="#0b0b0d"/><path d="M2101.25 402.57 L2101.25 401.50 Q2101.25 400.43 2102.96 400.43 L2112.44 400.43 Q2114.15 400.43 2114.15 401.50 L2114.15 402.57 Z" fill="#8f8f91"/><rect x="2101.25" y="403.97" width="12.90" height="14.25" fill="#bac8e2"/><rect x="2101.25" y="419.62" width="12.90" height="125.58" fill="#7ba8d0"/><rect x="2101.25" y="545.70" width="12.90" height="5.30" fill="#fde14c"/><path d="M2101.25 552.40 L2114.15 552.40 L2114.15 554.00 Q2114.15 555.60 2111.59 555.60 L2103.81 555.60 Q2101.25 555.60 2101.25 554.00 Z" fill="#e3323a"/><rect x="2115.16" y="408.16" width="13.90" height="148.04" fill="#0b0b0d"/><path d="M2115.66 410.81 L2115.66 409.89 Q2115.66 408.96 2117.14 408.96 L2127.08 408.96 Q2128.56 408.96 2128.56 409.89 L2128.56 410.81 Z" fill="#8f8f91"/><rect x="2115.66" y="412.21" width="12.90" height="12.57" fill="#bac8e2"/><rect x="2115.66" y="426.19" width="12.90" height="119.01" fill="#7ba8d0"/><rect x="2115.66" y="546.40" width="12.90" height="4.60" fill="#fde14c"/><path d="M2115.66 552.40 L2128.56 552.40 L2128.56 554.00 Q2128.56 555.60 2126.00 555.60 L2118.22 555.60 Q2115.66 555.60 2115.66 554.00 Z" fill="#e3323a"/><rect x="2129.57" y="391.67" width="13.90" height="164.53" fill="#0b0b0d"/><path d="M2130.07 394.88 L2130.07 393.67 Q2130.07 392.47 2132.00 392.47 L2141.04 392.47 Q2142.97 392.47 2142.97 393.67 L2142.97 394.88 Z" fill="#8f8f91"/><rect x="2130.07" y="396.28" width="12.90" height="14.95" fill="#bac8e2"/><rect x="2130.07" y="412.63" width="12.90" height="132.57" fill="#7ba8d0"/><rect x="2130.07" y="546.40" width="12.90" height="4.60" fill="#fde14c"/><path d="M2130.07 552.40 L2142.97 552.40 L2142.97 554.00 Q2142.97 555.60 2140.41 555.60 L2132.63 555.60 Q2130.07 555.60 2130.07 554.00 Z" fill="#e3323a"/><rect x="2143.98" y="407.74" width="13.90" height="148.46" fill="#0b0b0d"/><path d="M2144.48 410.81 L2144.48 409.68 Q2144.48 408.54 2146.30 408.54 L2155.56 408.54 Q2157.38 408.54 2157.38 409.68 L2157.38 410.81 Z" fill="#8f8f91"/><rect x="2144.48" y="412.21" width="12.90" height="12.57" fill="#bac8e2"/><rect x="2144.48" y="426.19" width="12.90" height="119.01" fill="#7ba8d0"/><rect x="2144.48" y="546.40" width="12.90" height="4.60" fill="#fde14c"/><path d="M2144.48 552.40 L2157.38 552.40 L2157.38 554.00 Q2157.38 555.60 2154.82 555.60 L2147.04 555.60 Q2144.48 555.60 2144.48 554.00 Z" fill="#e3323a"/><rect x="2158.39" y="401.45" width="13.90" height="154.75" fill="#0b0b0d"/><path d="M2158.89 404.66 L2158.89 403.46 Q2158.89 402.25 2160.82 402.25 L2169.86 402.25 Q2171.79 402.25 2171.79 403.46 L2171.79 404.66 Z" fill="#8f8f91"/><rect x="2158.89" y="406.06" width="12.90" height="12.85" fill="#bac8e2"/><rect x="2158.89" y="420.32" width="12.90" height="124.88" fill="#7ba8d0"/><rect x="2158.89" y="547.10" width="12.90" height="3.90" fill="#fde14c"/><path d="M2158.89 552.40 L2171.79 552.40 L2171.79 554.00 Q2171.79 555.60 2169.23 555.60 L2161.45 555.60 Q2158.89 555.60 2158.89 554.00 Z" fill="#e3323a"/><rect x="2172.80" y="389.29" width="13.90" height="166.91" fill="#0b0b0d"/><path d="M2173.30 392.65 L2173.30 391.37 Q2173.30 390.09 2175.34 390.09 L2184.16 390.09 Q2186.20 390.09 2186.20 391.37 L2186.20 392.65 Z" fill="#8f8f91"/><rect x="2173.30" y="394.05" width="12.90" height="14.39" fill="#bac8e2"/><rect x="2173.30" y="409.84" width="12.90" height="135.36" fill="#7ba8d0"/><rect x="2173.30" y="546.40" width="12.90" height="4.60" fill="#fde14c"/><path d="M2173.30 552.40 L2186.20 552.40 L2186.20 554.00 Q2186.20 555.60 2183.64 555.60 L2175.86 555.60 Q2173.30 555.60 2173.30 554.00 Z" fill="#e3323a"/><rect x="2187.21" y="405.22" width="13.90" height="150.98" fill="#0b0b0d"/><path d="M2187.71 408.44 L2187.71 407.23 Q2187.71 406.02 2189.64 406.02 L2198.68 406.02 Q2200.61 406.02 2200.61 407.23 L2200.61 408.44 Z" fill="#8f8f91"/><rect x="2187.71" y="409.84" width="12.90" height="13.27" fill="#bac8e2"/><rect x="2187.71" y="424.51" width="12.90" height="120.69" fill="#7ba8d0"/><rect x="2187.71" y="546.40" width="12.90" height="4.60" fill="#fde14c"/><path d="M2187.71 552.40 L2200.61 552.40 L2200.61 554.00 Q2200.61 555.60 2198.05 555.60 L2190.27 555.60 Q2187.71 555.60 2187.71 554.00 Z" fill="#e3323a"/><rect x="2201.62" y="392.37" width="13.90" height="163.83" fill="#0b0b0d"/><path d="M2202.12 395.58 L2202.12 394.37 Q2202.12 393.17 2204.05 393.17 L2213.09 393.17 Q2215.02 393.17 2215.02 394.37 L2215.02 395.58 Z" fill="#8f8f91"/><rect x="2202.12" y="396.98" width="12.90" height="15.23" fill="#bac8e2"/><rect x="2202.12" y="413.61" width="12.90" height="131.59" fill="#7ba8d0"/><rect x="2202.12" y="545.70" width="12.90" height="5.30" fill="#fde14c"/><path d="M2202.12 552.40 L2215.02 552.40 L2215.02 554.00 Q2215.02 555.60 2212.46 555.60 L2204.68 555.60 Q2202.12 555.60 2202.12 554.00 Z" fill="#e3323a"/><rect x="2216.03" y="396.14" width="13.90" height="160.06" fill="#0b0b0d"/><path d="M2216.53 399.35 L2216.53 398.15 Q2216.53 396.94 2218.46 396.94 L2227.50 396.94 Q2229.43 396.94 2229.43 398.15 L2229.43 399.35 Z" fill="#8f8f91"/><rect x="2216.53" y="400.75" width="12.90" height="12.85" fill="#bac8e2"/><rect x="2216.53" y="415.01" width="12.90" height="130.19" fill="#7ba8d0"/><rect x="2216.53" y="546.40" width="12.90" height="4.60" fill="#fde14c"/><path d="M2216.53 552.40 L2229.43 552.40 L2229.43 554.00 Q2229.43 555.60 2226.87 555.60 L2219.09 555.60 Q2216.53 555.60 2216.53 554.00 Z" fill="#e3323a"/><rect x="2230.44" y="379.51" width="13.90" height="176.69" fill="#0b0b0d"/><path d="M2230.94 382.31 L2230.94 381.31 Q2230.94 380.31 2232.53 380.31 L2242.24 380.31 Q2243.84 380.31 2243.84 381.31 L2243.84 382.31 Z" fill="#8f8f91"/><rect x="2230.94" y="383.71" width="12.90" height="16.35" fill="#bac8e2"/><rect x="2230.94" y="401.45" width="12.90" height="143.75" fill="#7ba8d0"/><rect x="2230.94" y="547.10" width="12.90" height="3.90" fill="#fde14c"/><path d="M2230.94 552.40 L2243.84 552.40 L2243.84 554.00 Q2243.84 555.60 2241.28 555.60 L2233.50 555.60 Q2230.94 555.60 2230.94 554.00 Z" fill="#e3323a"/><rect x="2244.85" y="405.64" width="13.90" height="150.56" fill="#0b0b0d"/><path d="M2245.35 408.72 L2245.35 407.58 Q2245.35 406.44 2247.17 406.44 L2256.43 406.44 Q2258.25 406.44 2258.25 407.58 L2258.25 408.72 Z" fill="#8f8f91"/><rect x="2245.35" y="410.12" width="12.90" height="14.11" fill="#bac8e2"/><rect x="2245.35" y="425.63" width="12.90" height="119.57" fill="#7ba8d0"/><rect x="2245.35" y="546.40" width="12.90" height="4.60" fill="#fde14c"/><path d="M2245.35 552.40 L2258.25 552.40 L2258.25 554.00 Q2258.25 555.60 2255.69 555.60 L2247.91 555.60 Q2245.35 555.60 2245.35 554.00 Z" fill="#e3323a"/><rect x="2259.26" y="401.45" width="13.90" height="154.75" fill="#0b0b0d"/><path d="M2259.76 404.24 L2259.76 403.25 Q2259.76 402.25 2261.35 402.25 L2271.06 402.25 Q2272.66 402.25 2272.66 403.25 L2272.66 404.24 Z" fill="#8f8f91"/><rect x="2259.76" y="405.64" width="12.90" height="13.97" fill="#bac8e2"/><rect x="2259.76" y="421.02" width="12.90" height="124.18" fill="#7ba8d0"/><rect x="2259.76" y="546.40" width="12.90" height="4.60" fill="#fde14c"/><path d="M2259.76 552.40 L2272.66 552.40 L2272.66 554.00 Q2272.66 555.60 2270.10 555.60 L2262.32 555.60 Q2259.76 555.60 2259.76 554.00 Z" fill="#e3323a"/><rect x="2273.67" y="408.16" width="13.90" height="148.04" fill="#0b0b0d"/><path d="M2274.17 411.23 L2274.17 410.09 Q2274.17 408.96 2275.99 408.96 L2285.25 408.96 Q2287.07 408.96 2287.07 410.09 L2287.07 411.23 Z" fill="#8f8f91"/><rect x="2274.17" y="412.63" width="12.90" height="12.16" fill="#bac8e2"/><rect x="2274.17" y="426.19" width="12.90" height="119.01" fill="#7ba8d0"/><rect x="2274.17" y="546.40" width="12.90" height="4.60" fill="#fde14c"/><path d="M2274.17 552.40 L2287.07 552.40 L2287.07 554.00 Q2287.07 555.60 2284.51 555.60 L2276.73 555.60 Q2274.17 555.60 2274.17 554.00 Z" fill="#e3323a"/><rect x="2288.08" y="391.67" width="13.90" height="164.53" fill="#0b0b0d"/><path d="M2288.58 394.46 L2288.58 393.47 Q2288.58 392.47 2290.17 392.47 L2299.88 392.47 Q2301.48 392.47 2301.48 393.47 L2301.48 394.46 Z" fill="#8f8f91"/><rect x="2288.58" y="395.86" width="12.90" height="14.39" fill="#bac8e2"/><rect x="2288.58" y="411.65" width="12.90" height="133.55" fill="#7ba8d0"/><rect x="2288.58" y="546.40" width="12.90" height="4.60" fill="#fde14c"/><path d="M2288.58 552.40 L2301.48 552.40 L2301.48 554.00 Q2301.48 555.60 2298.92 555.60 L2291.14 555.60 Q2288.58 555.60 2288.58 554.00 Z" fill="#e3323a"/><rect x="2302.49" y="393.07" width="13.90" height="163.13" fill="#0b0b0d"/><path d="M2302.99 395.86 L2302.99 394.86 Q2302.99 393.87 2304.58 393.87 L2314.29 393.87 Q2315.89 393.87 2315.89 394.86 L2315.89 395.86 Z" fill="#8f8f91"/><rect x="2302.99" y="397.26" width="12.90" height="14.95" fill="#bac8e2"/><rect x="2302.99" y="413.61" width="12.90" height="131.59" fill="#7ba8d0"/><rect x="2302.99" y="546.40" width="12.90" height="4.60" fill="#fde14c"/><path d="M2302.99 552.40 L2315.89 552.40 L2315.89 554.00 Q2315.89 555.60 2313.33 555.60 L2305.55 555.60 Q2302.99 555.60 2302.99 554.00 Z" fill="#e3323a"/><rect x="2316.90" y="406.06" width="13.90" height="150.14" fill="#0b0b0d"/><path d="M2317.40 409.14 L2317.40 408.00 Q2317.40 406.86 2319.22 406.86 L2328.48 406.86 Q2330.30 406.86 2330.30 408.00 L2330.30 409.14 Z" fill="#8f8f91"/><rect x="2317.40" y="410.54" width="12.90" height="12.57" fill="#bac8e2"/><rect x="2317.40" y="424.51" width="12.90" height="120.69" fill="#7ba8d0"/><rect x="2317.40" y="546.40" width="12.90" height="4.60" fill="#fde14c"/><path d="M2317.40 552.40 L2330.30 552.40 L2330.30 554.00 Q2330.30 555.60 2327.74 555.60 L2319.96 555.60 Q2317.40 555.60 2317.40 554.00 Z" fill="#e3323a"/><rect x="2331.31" y="401.73" width="13.90" height="154.47" fill="#0b0b0d"/><path d="M2331.81 404.66 L2331.81 403.60 Q2331.81 402.53 2333.51 402.53 L2343.00 402.53 Q2344.71 402.53 2344.71 403.60 L2344.71 404.66 Z" fill="#8f8f91"/><rect x="2331.81" y="406.06" width="12.90" height="12.57" fill="#bac8e2"/><rect x="2331.81" y="420.04" width="12.90" height="125.16" fill="#7ba8d0"/><rect x="2331.81" y="546.40" width="12.90" height="4.60" fill="#fde14c"/><path d="M2331.81 552.40 L2344.71 552.40 L2344.71 554.00 Q2344.71 555.60 2342.15 555.60 L2334.37 555.60 Q2331.81 555.60 2331.81 554.00 Z" fill="#e3323a"/><rect x="2345.72" y="403.51" width="13.90" height="152.69" fill="#0b0b0d"/><path d="M2346.22 406.79 L2346.22 405.55 Q2346.22 404.31 2348.20 404.31 L2357.13 404.31 Q2359.12 404.31 2359.12 405.55 L2359.12 406.79 Z" fill="#8f8f91"/><rect x="2346.22" y="408.19" width="12.90" height="12.67" fill="#bac8e2"/><rect x="2346.22" y="422.26" width="12.90" height="122.94" fill="#7ba8d0"/><rect x="2346.22" y="546.40" width="12.90" height="4.60" fill="#fde14c"/><path d="M2346.22 552.40 L2359.12 552.40 L2359.12 554.00 Q2359.12 555.60 2356.56 555.60 L2348.78 555.60 Q2346.22 555.60 2346.22 554.00 Z" fill="#e3323a"/><rect x="2360.12" y="390.03" width="13.90" height="166.17" fill="#0b0b0d"/><path d="M2360.62 393.19 L2360.62 392.01 Q2360.62 390.83 2362.52 390.83 L2371.63 390.83 Q2373.53 390.83 2373.53 392.01 L2373.53 393.19 Z" fill="#8f8f91"/><rect x="2360.62" y="394.59" width="12.90" height="14.54" fill="#bac8e2"/><rect x="2360.62" y="410.54" width="12.90" height="134.66" fill="#7ba8d0"/><rect x="2360.62" y="546.40" width="12.90" height="4.60" fill="#fde14c"/><path d="M2360.62 552.40 L2373.53 552.40 L2373.53 554.00 Q2373.53 555.60 2370.97 555.60 L2363.18 555.60 Q2360.62 555.60 2360.62 554.00 Z" fill="#e3323a"/><rect x="2374.53" y="397.29" width="13.90" height="158.91" fill="#0b0b0d"/><path d="M2375.03 400.58 L2375.03 399.34 Q2375.03 398.09 2377.02 398.09 L2385.95 398.09 Q2387.93 398.09 2387.93 399.34 L2387.93 400.58 Z" fill="#8f8f91"/><rect x="2375.03" y="401.98" width="12.90" height="14.19" fill="#bac8e2"/><rect x="2375.03" y="417.57" width="12.90" height="127.63" fill="#7ba8d0"/><rect x="2375.03" y="547.10" width="12.90" height="3.90" fill="#fde14c"/><path d="M2375.03 552.40 L2387.93 552.40 L2387.93 554.00 Q2387.93 555.60 2385.37 555.60 L2377.59 555.60 Q2375.03 555.60 2375.03 554.00 Z" fill="#e3323a"/><rect x="2388.94" y="399.76" width="13.90" height="156.44" fill="#0b0b0d"/><path d="M2389.44 402.92 L2389.44 401.74 Q2389.44 400.56 2391.34 400.56 L2400.45 400.56 Q2402.34 400.56 2402.34 401.74 L2402.34 402.92 Z" fill="#8f8f91"/><rect x="2389.44" y="404.32" width="12.90" height="12.67" fill="#bac8e2"/><rect x="2389.44" y="418.39" width="12.90" height="126.81" fill="#7ba8d0"/><rect x="2389.44" y="546.40" width="12.90" height="4.60" fill="#fde14c"/><path d="M2389.44 552.40 L2402.34 552.40 L2402.34 554.00 Q2402.34 555.60 2399.78 555.60 L2392.00 555.60 Q2389.44 555.60 2389.44 554.00 Z" fill="#e3323a"/><rect x="2403.35" y="410.54" width="13.90" height="145.66" fill="#0b0b0d"/><path d="M2403.85 413.82 L2403.85 412.58 Q2403.85 411.34 2405.84 411.34 L2414.77 411.34 Q2416.75 411.34 2416.75 412.58 L2416.75 413.82 Z" fill="#8f8f91"/><rect x="2403.85" y="415.22" width="12.90" height="11.14" fill="#bac8e2"/><rect x="2403.85" y="427.77" width="12.90" height="117.43" fill="#7ba8d0"/><rect x="2403.85" y="545.70" width="12.90" height="5.30" fill="#fde14c"/><path d="M2403.85 552.40 L2416.75 552.40 L2416.75 554.00 Q2416.75 555.60 2414.19 555.60 L2406.41 555.60 Q2403.85 555.60 2403.85 554.00 Z" fill="#e3323a"/><rect x="2417.76" y="404.33" width="13.90" height="151.87" fill="#0b0b0d"/><path d="M2418.26 407.61 L2418.26 406.37 Q2418.26 405.13 2420.25 405.13 L2429.18 405.13 Q2431.16 405.13 2431.16 406.37 L2431.16 407.61 Z" fill="#8f8f91"/><rect x="2418.26" y="409.01" width="12.90" height="13.25" fill="#bac8e2"/><rect x="2418.26" y="423.67" width="12.90" height="121.53" fill="#7ba8d0"/><rect x="2418.26" y="546.40" width="12.90" height="4.60" fill="#fde14c"/><path d="M2418.26 552.40 L2431.16 552.40 L2431.16 554.00 Q2431.16 555.60 2428.60 555.60 L2420.82 555.60 Q2418.26 555.60 2418.26 554.00 Z" fill="#e3323a"/><rect x="2432.17" y="407.26" width="13.90" height="148.94" fill="#0b0b0d"/><path d="M2432.67 410.54 L2432.67 409.30 Q2432.67 408.06 2434.66 408.06 L2443.59 408.06 Q2445.57 408.06 2445.57 409.30 L2445.57 410.54 Z" fill="#8f8f91"/><rect x="2432.67" y="411.94" width="12.90" height="13.25" fill="#bac8e2"/><rect x="2432.67" y="426.60" width="12.90" height="118.60" fill="#7ba8d0"/><rect x="2432.67" y="546.40" width="12.90" height="4.60" fill="#fde14c"/><path d="M2432.67 552.40 L2445.57 552.40 L2445.57 554.00 Q2445.57 555.60 2443.01 555.60 L2435.23 555.60 Q2432.67 555.60 2432.67 554.00 Z" fill="#e3323a"/><rect x="2446.58" y="397.41" width="13.90" height="158.79" fill="#0b0b0d"/><path d="M2447.08 400.58 L2447.08 399.39 Q2447.08 398.21 2448.98 398.21 L2458.09 398.21 Q2459.98 398.21 2459.98 399.39 L2459.98 400.58 Z" fill="#8f8f91"/><rect x="2447.08" y="401.98" width="12.90" height="12.67" fill="#bac8e2"/><rect x="2447.08" y="416.05" width="12.90" height="129.15" fill="#7ba8d0"/><rect x="2447.08" y="547.10" width="12.90" height="3.90" fill="#fde14c"/><path d="M2447.08 552.40 L2459.98 552.40 L2459.98 554.00 Q2459.98 555.60 2457.42 555.60 L2449.64 555.60 Q2447.08 555.60 2447.08 554.00 Z" fill="#e3323a"/><rect x="2460.99" y="394.36" width="13.90" height="161.84" fill="#0b0b0d"/><path d="M2461.49 397.65 L2461.49 396.41 Q2461.49 395.16 2463.48 395.16 L2472.41 395.16 Q2474.39 395.16 2474.39 396.41 L2474.39 397.65 Z" fill="#8f8f91"/><rect x="2461.49" y="399.05" width="12.90" height="12.43" fill="#bac8e2"/><rect x="2461.49" y="412.88" width="12.90" height="132.32" fill="#7ba8d0"/><rect x="2461.49" y="546.40" width="12.90" height="4.60" fill="#fde14c"/><path d="M2461.49 552.40 L2474.39 552.40 L2474.39 554.00 Q2474.39 555.60 2471.83 555.60 L2464.05 555.60 Q2461.49 555.60 2461.49 554.00 Z" fill="#e3323a"/><rect x="2475.40" y="400.93" width="13.90" height="155.27" fill="#0b0b0d"/><path d="M2475.90 403.74 L2475.90 402.74 Q2475.90 401.73 2477.51 401.73 L2487.19 401.73 Q2488.80 401.73 2488.80 402.74 L2488.80 403.74 Z" fill="#8f8f91"/><rect x="2475.90" y="405.14" width="12.90" height="13.84" fill="#bac8e2"/><rect x="2475.90" y="420.38" width="12.90" height="124.82" fill="#7ba8d0"/><rect x="2475.90" y="546.40" width="12.90" height="4.60" fill="#fde14c"/><path d="M2475.90 552.40 L2488.80 552.40 L2488.80 554.00 Q2488.80 555.60 2486.24 555.60 L2478.46 555.60 Q2475.90 555.60 2475.90 554.00 Z" fill="#e3323a"/><rect x="2489.81" y="394.95" width="13.90" height="161.25" fill="#0b0b0d"/><path d="M2490.31 398.23 L2490.31 396.99 Q2490.31 395.75 2492.30 395.75 L2501.23 395.75 Q2503.21 395.75 2503.21 396.99 L2503.21 398.23 Z" fill="#8f8f91"/><rect x="2490.31" y="399.63" width="12.90" height="13.84" fill="#bac8e2"/><rect x="2490.31" y="414.87" width="12.90" height="130.33" fill="#7ba8d0"/><rect x="2490.31" y="546.40" width="12.90" height="4.60" fill="#fde14c"/><path d="M2490.31 552.40 L2503.21 552.40 L2503.21 554.00 Q2503.21 555.60 2500.65 555.60 L2492.87 555.60 Q2490.31 555.60 2490.31 554.00 Z" fill="#e3323a"/><rect x="2504.22" y="399.05" width="13.90" height="157.15" fill="#0b0b0d"/><path d="M2504.72 402.10 L2504.72 400.98 Q2504.72 399.85 2506.52 399.85 L2515.82 399.85 Q2517.62 399.85 2517.62 400.98 L2517.62 402.10 Z" fill="#8f8f91"/><rect x="2504.72" y="403.50" width="12.90" height="13.49" fill="#bac8e2"/><rect x="2504.72" y="418.39" width="12.90" height="126.81" fill="#7ba8d0"/><rect x="2504.72" y="545.70" width="12.90" height="5.30" fill="#fde14c"/><path d="M2504.72 552.40 L2517.62 552.40 L2517.62 554.00 Q2517.62 555.60 2515.06 555.60 L2507.28 555.60 Q2504.72 555.60 2504.72 554.00 Z" fill="#e3323a"/><rect x="2518.63" y="401.16" width="13.90" height="155.04" fill="#0b0b0d"/><path d="M2519.13 404.45 L2519.13 403.20 Q2519.13 401.96 2521.12 401.96 L2530.05 401.96 Q2532.03 401.96 2532.03 403.20 L2532.03 404.45 Z" fill="#8f8f91"/><rect x="2519.13" y="405.85" width="12.90" height="13.84" fill="#bac8e2"/><rect x="2519.13" y="421.09" width="12.90" height="124.11" fill="#7ba8d0"/><rect x="2519.13" y="547.10" width="12.90" height="3.90" fill="#fde14c"/><path d="M2519.13 552.40 L2532.03 552.40 L2532.03 554.00 Q2532.03 555.60 2529.47 555.60 L2521.69 555.60 Q2519.13 555.60 2519.13 554.00 Z" fill="#e3323a"/><rect x="2533.04" y="404.92" width="13.90" height="151.28" fill="#0b0b0d"/><path d="M2533.54 407.85 L2533.54 406.78 Q2533.54 405.72 2535.25 405.72 L2544.74 405.72 Q2546.44 405.72 2546.44 406.78 L2546.44 407.85 Z" fill="#8f8f91"/><rect x="2533.54" y="409.25" width="12.90" height="12.79" fill="#bac8e2"/><rect x="2533.54" y="423.43" width="12.90" height="121.77" fill="#7ba8d0"/><rect x="2533.54" y="546.40" width="12.90" height="4.60" fill="#fde14c"/><path d="M2533.54 552.40 L2546.44 552.40 L2546.44 554.00 Q2546.44 555.60 2543.88 555.60 L2536.10 555.60 Q2533.54 555.60 2533.54 554.00 Z" fill="#e3323a"/><rect x="2547.45" y="393.90" width="13.90" height="162.30" fill="#0b0b0d"/><path d="M2547.95 397.06 L2547.95 395.88 Q2547.95 394.70 2549.84 394.70 L2558.96 394.70 Q2560.85 394.70 2560.85 395.88 L2560.85 397.06 Z" fill="#8f8f91"/><rect x="2547.95" y="398.46" width="12.90" height="14.43" fill="#bac8e2"/><rect x="2547.95" y="414.29" width="12.90" height="130.91" fill="#7ba8d0"/><rect x="2547.95" y="546.40" width="12.90" height="4.60" fill="#fde14c"/><path d="M2547.95 552.40 L2560.85 552.40 L2560.85 554.00 Q2560.85 555.60 2558.29 555.60 L2550.51 555.60 Q2547.95 555.60 2547.95 554.00 Z" fill="#e3323a"/><rect x="2561.86" y="394.36" width="13.90" height="161.84" fill="#0b0b0d"/><path d="M2562.36 397.65 L2562.36 396.41 Q2562.36 395.16 2564.35 395.16 L2573.28 395.16 Q2575.26 395.16 2575.26 396.41 L2575.26 397.65 Z" fill="#8f8f91"/><rect x="2562.36" y="399.05" width="12.90" height="14.43" fill="#bac8e2"/><rect x="2562.36" y="414.87" width="12.90" height="130.33" fill="#7ba8d0"/><rect x="2562.36" y="546.40" width="12.90" height="4.60" fill="#fde14c"/><path d="M2562.36 552.40 L2575.26 552.40 L2575.26 554.00 Q2575.26 555.60 2572.70 555.60 L2564.92 555.60 Q2562.36 555.60 2562.36 554.00 Z" fill="#e3323a"/><rect x="2576.27" y="422.03" width="13.90" height="134.17" fill="#0b0b0d"/><path d="M2576.77 431.64 L2576.77 424.43 Q2576.77 422.83 2579.33 422.83 L2587.11 422.83 Q2589.67 422.83 2589.67 424.43 L2589.67 431.64 Z" fill="#8f8f91"/><rect x="2576.77" y="433.04" width="12.90" height="8.56" fill="#bac8e2"/><rect x="2576.77" y="443.01" width="12.90" height="102.19" fill="#7ba8d0"/><rect x="2576.77" y="546.40" width="12.90" height="4.60" fill="#fde14c"/><path d="M2576.77 552.40 L2589.67 552.40 L2589.67 554.00 Q2589.67 555.60 2587.11 555.60 L2579.33 555.60 Q2576.77 555.60 2576.77 554.00 Z" fill="#e3323a"/><rect x="2590.68" y="385.92" width="13.90" height="170.28" fill="#0b0b0d"/><path d="M2591.18 391.78 L2591.18 388.32 Q2591.18 386.72 2593.74 386.72 L2601.52 386.72 Q2604.08 386.72 2604.08 388.32 L2604.08 391.78 Z" fill="#8f8f91"/><rect x="2591.18" y="393.18" width="12.90" height="12.43" fill="#bac8e2"/><rect x="2591.18" y="407.02" width="12.90" height="138.18" fill="#7ba8d0"/><rect x="2591.18" y="547.10" width="12.90" height="3.90" fill="#fde14c"/><path d="M2591.18 552.40 L2604.08 552.40 L2604.08 554.00 Q2604.08 555.60 2601.52 555.60 L2593.74 555.60 Q2591.18 555.60 2591.18 554.00 Z" fill="#e3323a"/><rect x="2605.09" y="399.99" width="15.41" height="156.21" fill="#0b0b0d"/><path d="M2605.59 402.92 L2605.59 401.86 Q2605.59 400.79 2607.29 400.79 L2618.30 400.79 Q2620.00 400.79 2620.00 401.86 L2620.00 402.92 Z" fill="#8f8f91"/><rect x="2605.59" y="404.32" width="14.41" height="12.32" fill="#bac8e2"/><rect x="2605.59" y="418.04" width="14.41" height="127.16" fill="#7ba8d0"/><rect x="2605.59" y="545.70" width="14.41" height="5.30" fill="#fde14c"/><path d="M2605.59 552.40 L2620.00 552.40 L2620.00 554.00 Q2620.00 555.60 2617.44 555.60 L2608.15 555.60 Q2605.59 555.60 2605.59 554.00 Z" fill="#e3323a"/></svg><div style="position:absolute;left:545px;top:557px;width:2075px;height:2px;background:#313134;border-radius:0px;box-sizing:border-box;"></div><div style="position:absolute;left:545px;top:559px;width:1px;height:11px;background:#3a3a3d;border-radius:0px;box-sizing:border-box;"></div><div style="position:absolute;left:1384px;top:559px;width:1px;height:11px;background:#3a3a3d;border-radius:0px;box-sizing:border-box;"></div><div style="position:absolute;left:1903px;top:559px;width:1px;height:11px;background:#3a3a3d;border-radius:0px;box-sizing:border-box;"></div><div class="t" style="left:551px;top:568px;font-size:18px;line-height:18px;color:#c8c8ca;font-weight:400;font-family:'Liberation Sans', sans-serif;letter-spacing:-0.329px;">14:17</div><div class="t" style="left:551px;top:590px;font-size:18px;line-height:18px;color:#7a7a7c;font-weight:400;font-family:'Liberation Sans', sans-serif;letter-spacing:1.066px;">Yesterday</div><div class="t" style="left:1391px;top:568px;font-size:18px;line-height:18px;color:#c8c8ca;font-weight:400;font-family:'Liberation Sans', sans-serif;letter-spacing:1.291px;">00:00</div><div class="t" style="left:1391px;top:590px;font-size:18px;line-height:18px;color:#7a7a7c;font-weight:400;font-family:'Liberation Sans', sans-serif;letter-spacing:0.991px;">Today</div><div class="t" style="left:1909px;top:568px;font-size:18px;line-height:18px;color:#c8c8ca;font-weight:400;font-family:'Liberation Sans', sans-serif;letter-spacing:1.291px;">06:00</div><div style="position:absolute;left:552px;top:629px;width:18px;height:18px;background:#e3323a;border-radius:3px;box-sizing:border-box;"></div><div class="t" style="left:578px;top:628px;font-size:22px;line-height:22px;color:#a8a8aa;font-weight:400;font-family:'Liberation Sans', sans-serif;letter-spacing:-0.894px;">ERROR &amp; FATAL</div><div style="position:absolute;left:759px;top:629px;width:18px;height:18px;background:#fde14c;border-radius:3px;box-sizing:border-box;"></div><div class="t" style="left:785px;top:628px;font-size:22px;line-height:22px;color:#a8a8aa;font-weight:400;font-family:'Liberation Sans', sans-serif;letter-spacing:-0.852px;">WARN</div><div style="position:absolute;left:871px;top:629px;width:18px;height:18px;background:#7ba8d0;border-radius:3px;box-sizing:border-box;"></div><div class="t" style="left:897px;top:628px;font-size:22px;line-height:22px;color:#a8a8aa;font-weight:400;font-family:'Liberation Sans', sans-serif;letter-spacing:-0.791px;">INFO</div><div style="position:absolute;left:969px;top:629px;width:18px;height:18px;background:#bac8e2;border-radius:3px;box-sizing:border-box;"></div><div class="t" style="left:995px;top:628px;font-size:22px;line-height:22px;color:#a8a8aa;font-weight:400;font-family:'Liberation Sans', sans-serif;letter-spacing:-0.746px;">TRACE &amp; DEBUG</div><div style="position:absolute;left:1188px;top:629px;width:18px;height:18px;background:#8f8f91;border-radius:3px;box-sizing:border-box;"></div><div class="t" style="left:1214px;top:628px;font-size:22px;line-height:22px;color:#a8a8aa;font-weight:400;font-family:'Liberation Sans', sans-serif;letter-spacing:-0.158px;">UNKNOWN</div><div style="position:absolute;left:523px;top:687px;width:2119px;height:1px;background:#2f2f32;border-radius:0px;box-sizing:border-box;"></div><div style="position:absolute;left:523px;top:688px;width:2119px;height:94px;background:#1f1f22;border-radius:0px;box-sizing:border-box;"></div><div style="position:absolute;left:523px;top:782px;width:2119px;height:1px;background:#2f2f32;border-radius:0px;box-sizing:border-box;"></div><div class="t" style="left:546px;top:725px;font-size:22px;line-height:22px;color:#a8a8aa;font-weight:400;font-family:'Liberation Sans', sans-serif;letter-spacing:0.195px;">Logs</div><div style="position:absolute;left:610px;top:714px;width:549px;height:42px;background:#19191b;border-radius:10px;box-sizing:border-box;"></div><div style="position:absolute;left:610px;top:714px;width:123px;height:42px;background:#343437;border:1px solid #444447;border-radius:10px;box-sizing:border-box;"></div><svg style="position:absolute;left:627px;top:723px;" width="25" height="25" viewBox="0 0 25 25" fill="none"><rect x="1" y="1" width="23" height="23" rx="3.2" stroke="#f2f2f3" stroke-width="2"/><line x1="1" y1="8.2" x2="24" y2="8.2" stroke="#f2f2f3" stroke-width="2"/><line x1="1" y1="16.6" x2="24" y2="16.6" stroke="#f2f2f3" stroke-width="2"/><line x1="12.5" y1="1" x2="12.5" y2="24" stroke="#f2f2f3" stroke-width="2"/></svg><div class="t" style="left:662px;top:725px;font-size:22px;line-height:22px;color:#f2f2f3;font-weight:400;font-family:'Liberation Sans', sans-serif;letter-spacing:0.481px;">Table</div><svg style="position:absolute;left:749px;top:722px;" width="27" height="27" viewBox="0 0 27 27" fill="none"><path d="M1.2 7 L1.2 4.2 C1.2 2.5 2.5 1.2 4.2 1.2 L7 1.2 M19 1.2 L21.8 1.2 C23.5 1.2 24.8 2.5 24.8 4.2 L24.8 7 M24.8 19 L24.8 21.8 C24.8 23.5 23.5 24.8 21.8 24.8 L19 24.8 M7 24.8 L4.2 24.8 C2.5 24.8 1.2 23.5 1.2 21.8 L1.2 19" stroke="#a9a9ab" stroke-width="1.9" stroke-linecap="round"/><rect x="5.6" y="7.6" width="11.6" height="6.6" rx="1.6" stroke="#a9a9ab" stroke-width="1.9"/><rect x="9.6" y="14.2" width="11.6" height="6.6" rx="1.6" stroke="#a9a9ab" stroke-width="1.9"/></svg><div class="t" style="left:785px;top:725px;font-size:22px;line-height:22px;color:#a8a8aa;font-weight:400;font-family:'Liberation Sans', sans-serif;letter-spacing:0.191px;">Groups</div><svg style="position:absolute;left:891px;top:722px;" width="26" height="26" viewBox="0 0 26 26" fill="none"><ellipse cx="13" cy="13.2" rx="14.6" ry="5.6" transform="rotate(45 13 13.2)" stroke="#a9a9ab" stroke-width="1.9"/><ellipse cx="13" cy="13.2" rx="14.6" ry="5.6" transform="rotate(-45 13 13.2)" stroke="#a9a9ab" stroke-width="1.9"/><circle cx="13" cy="13.2" r="2.1" fill="#a9a9ab"/></svg><div class="t" style="left:927px;top:725px;font-size:22px;line-height:22px;color:#a8a8aa;font-weight:400;font-family:'Liberation Sans', sans-serif;letter-spacing:0.383px;">Patterns</div><svg style="position:absolute;left:1044px;top:721px;" width="28" height="28" viewBox="0 0 28 28" fill="none"><g transform="translate(14 15) rotate(-45)"><rect x="-16" y="-2.7" width="32" height="5.4" rx="1.6" stroke="#a9a9ab" stroke-width="1.9"/><line x1="9" y1="-2.7" x2="9" y2="2.7" stroke="#a9a9ab" stroke-width="1.6"/></g><path d="M5 6 L5 12 M2 9 L8 9 M22.2 17 L22.2 23 M19.2 20 L25.2 20" stroke="#a9a9ab" stroke-width="1.9" stroke-linecap="round"/><path d="M11 1.5 L12.8 3.3 L11 5.1 L9.2 3.3 Z" fill="#a9a9ab"/></svg><div class="t" style="left:1080px;top:725px;font-size:22px;line-height:22px;color:#a8a8aa;font-weight:400;font-family:'Liberation Sans', sans-serif;letter-spacing:0.342px;">Triage</div><div style="position:absolute;left:2476px;top:714px;width:144px;height:43px;background:#2e2e31;border:1px solid #434346;border-radius:10px;box-sizing:border-box;"></div><svg style="position:absolute;left:2487px;top:725px;" width="20" height="21" viewBox="0 0 20 21" fill="none"><circle cx="4.2" cy="4.4" r="3" stroke="#cfcfd1" stroke-width="1.9"/><line x1="7.4" y1="4.4" x2="17.8" y2="4.4" stroke="#cfcfd1" stroke-width="1.9" stroke-linecap="round"/><circle cx="15.6" cy="16" r="3" stroke="#cfcfd1" stroke-width="1.9"/><line x1="2" y1="16" x2="12.4" y2="16" stroke="#cfcfd1" stroke-width="1.9" stroke-linecap="round"/></svg><div class="t" style="left:2521px;top:726px;font-size:22px;line-height:22px;color:#f2f2f3;font-weight:400;font-family:'Liberation Sans', sans-serif;letter-spacing:0.488px;">Settings</div><div style="position:absolute;left:523px;top:783px;width:2119px;height:57px;background:#1f1f22;border-radius:0px;box-sizing:border-box;"></div><div style="position:absolute;left:523px;top:840px;width:2119px;height:1px;background:#38383b;border-radius:0px;box-sizing:border-box;"></div><div class="t" style="left:547px;top:801px;font-size:22px;line-height:22px;color:#c6c6c8;font-weight:400;font-family:'Liberation Sans', sans-serif;letter-spacing:0.314px;">Severity</div><div class="t" style="left:732px;top:801px;font-size:22px;line-height:22px;color:#c6c6c8;font-weight:400;font-family:'Liberation Sans', sans-serif;letter-spacing:0.230px;">Time</div><svg style="position:absolute;left:792px;top:802px;" width="16" height="17" viewBox="0 0 16 17" fill="none"><path d="M8 1 L8 16" stroke="#c6c6c8" stroke-width="1.7" stroke-linecap="round"/><path d="M2 10 L8 16 L14 10" stroke="#c6c6c8" stroke-width="1.7" stroke-linecap="round" stroke-linejoin="round"/></svg><div class="t" style="left:905px;top:801px;font-size:22px;line-height:22px;color:#c6c6c8;font-weight:400;font-family:'Liberation Sans', sans-serif;letter-spacing:-0.020px;">Resource</div><div class="t" style="left:1481px;top:801px;font-size:22px;line-height:22px;color:#c6c6c8;font-weight:400;font-family:'Liberation Sans', sans-serif;letter-spacing:0.361px;">Body</div><div style="position:absolute;left:1592px;top:797px;width:28px;height:29px;background:transparent;border:1px solid #4a4a4d;border-radius:5px;box-sizing:border-box;"></div><div class="t" style="left:1635px;top:801px;font-size:22px;line-height:22px;color:#c6c6c8;font-weight:400;font-family:'Liberation Sans', sans-serif;letter-spacing:1.346px;">Attributes</div><div style="position:absolute;left:546px;top:842px;width:3px;height:33px;background:#7eb1de;border-radius:0px;box-sizing:border-box;"></div><div class="t" style="left:571px;top:848px;font-size:22px;line-height:22px;color:#7eb1de;font-weight:400;font-family:'Liberation Sans', sans-serif;letter-spacing:-0.991px;">INFO</div><div class="t" style="left:731px;top:848px;font-size:22px;line-height:22px;color:#c8c8ca;font-weight:400;font-family:'Liberation Sans', sans-serif;letter-spacing:-0.472px;">14:17:41.608</div><div class="t" style="left:907px;top:848px;font-size:22px;line-height:22px;color:#c2c2c4;font-weight:400;font-family:'Liberation Sans', sans-serif;letter-spacing:0.665px;">opentelemetry-demo:productcatalogservice</div><div class="t" style="left:1483px;top:850px;font-size:22px;line-height:22px;color:#c8c8ca;font-weight:400;font-family:'Liberation Mono', monospace;letter-spacing:-0.232px;">Product Found - ID: 0PUK6V6EV0, Name: Solar System Color Imager</div><svg style="position:absolute;left:2612px;top:845px;" width="20" height="20" viewBox="0 0 20 20" fill="none"><rect x="0.8" y="0.8" width="6" height="6" rx="1.6" stroke="#7a7a7d" stroke-width="1.6"/><path d="M3.8 6.8 L3.8 12 C3.8 13.6 4.6 14.6 6.2 14.6 L11.8 14.6" stroke="#7a7a7d" stroke-width="1.6"/><rect x="11.8" y="11.6" width="6" height="6" rx="1.6" stroke="#7a7a7d" stroke-width="1.6"/></svg><div style="position:absolute;left:546px;top:889px;width:3px;height:65px;background:#7eb1de;border-radius:0px;box-sizing:border-box;"></div><div class="t" style="left:571px;top:895px;font-size:22px;line-height:22px;color:#7eb1de;font-weight:400;font-family:'Liberation Sans', sans-serif;letter-spacing:-0.991px;">INFO</div><div class="t" style="left:731px;top:895px;font-size:22px;line-height:22px;color:#c8c8ca;font-weight:400;font-family:'Liberation Sans', sans-serif;letter-spacing:-0.472px;">14:17:41.606</div><div class="t" style="left:907px;top:895px;font-size:22px;line-height:22px;color:#c2c2c4;font-weight:400;font-family:'Liberation Sans', sans-serif;letter-spacing:0.639px;">opentelemetry-demo:recommendationservice</div><div class="t" style="left:1483px;top:897px;font-size:22px;line-height:22px;color:#c8c8ca;font-weight:400;font-family:'Liberation Mono', monospace;letter-spacing:-0.232px;">Receive ListRecommendations for product ids:['0PUK6V6EV0', 'L9ECAV7KIM',</div><div class="t" style="left:1483px;top:930px;font-size:22px;line-height:22px;color:#c8c8ca;font-weight:400;font-family:'Liberation Mono', monospace;letter-spacing:-0.232px;">'OLJCESPC7Z', '6E92ZMYYFZ', '66VCHSJNUP']</div><svg style="position:absolute;left:2612px;top:892px;" width="20" height="20" viewBox="0 0 20 20" fill="none"><rect x="0.8" y="0.8" width="6" height="6" rx="1.6" stroke="#7a7a7d" stroke-width="1.6"/><path d="M3.8 6.8 L3.8 12 C3.8 13.6 4.6 14.6 6.2 14.6 L11.8 14.6" stroke="#7a7a7d" stroke-width="1.6"/><rect x="11.8" y="11.6" width="6" height="6" rx="1.6" stroke="#7a7a7d" stroke-width="1.6"/></svg><div style="position:absolute;left:546px;top:969px;width:3px;height:33px;background:#7eb1de;border-radius:0px;box-sizing:border-box;"></div><div class="t" style="left:571px;top:975px;font-size:22px;line-height:22px;color:#7eb1de;font-weight:400;font-family:'Liberation Sans', sans-serif;letter-spacing:-0.991px;">INFO</div><div class="t" style="left:731px;top:975px;font-size:22px;line-height:22px;color:#c8c8ca;font-weight:400;font-family:'Liberation Sans', sans-serif;letter-spacing:-0.472px;">14:17:41.605</div><div class="t" style="left:907px;top:975px;font-size:22px;line-height:22px;color:#727275;font-weight:400;font-family:'Liberation Sans', sans-serif;letter-spacing:0.268px;">Container</div><div class="t" style="left:1021px;top:975px;font-size:22px;line-height:22px;color:#c8c8ca;font-weight:400;font-family:'Liberation Sans', sans-serif;letter-spacing:0.297px;">3e9b13b70a1a4415d658e66e5b9b9c2...</div><div class="t" style="left:1483px;top:977px;font-size:22px;line-height:22px;color:#c8c8ca;font-weight:400;font-family:'Liberation Mono', monospace;letter-spacing:-0.232px;">GetCartAsync called with userId={userId}</div><svg style="position:absolute;left:2612px;top:972px;" width="20" height="20" viewBox="0 0 20 20" fill="none"><rect x="0.8" y="0.8" width="6" height="6" rx="1.6" stroke="#7a7a7d" stroke-width="1.6"/><path d="M3.8 6.8 L3.8 12 C3.8 13.6 4.6 14.6 6.2 14.6 L11.8 14.6" stroke="#7a7a7d" stroke-width="1.6"/><rect x="11.8" y="11.6" width="6" height="6" rx="1.6" stroke="#7a7a7d" stroke-width="1.6"/></svg><div style="position:absolute;left:546px;top:1017px;width:3px;height:33px;background:#e5383b;border-radius:0px;box-sizing:border-box;"></div><div class="t" style="left:571px;top:1023px;font-size:22px;line-height:22px;color:#e5383b;font-weight:400;font-family:'Liberation Sans', sans-serif;letter-spacing:-1.991px;">ERROR</div><div class="t" style="left:731px;top:1023px;font-size:22px;line-height:22px;color:#c8c8ca;font-weight:400;font-family:'Liberation Sans', sans-serif;letter-spacing:-0.472px;">14:17:41.593</div><div class="t" style="left:907px;top:1023px;font-size:22px;line-height:22px;color:#c2c2c4;font-weight:400;font-family:'Liberation Sans', sans-serif;letter-spacing:0.665px;">opentelemetry-demo:productcatalogservice</div><div class="t" style="left:1483px;top:1025px;font-size:22px;line-height:22px;color:#c8c8ca;font-weight:400;font-family:'Liberation Mono', monospace;letter-spacing:-0.232px;">Product Id Lookup Failed: OLJCESPC7Z</div><svg style="position:absolute;left:2612px;top:1020px;" width="20" height="20" viewBox="0 0 20 20" fill="none"><rect x="0.8" y="0.8" width="6" height="6" rx="1.6" stroke="#7a7a7d" stroke-width="1.6"/><path d="M3.8 6.8 L3.8 12 C3.8 13.6 4.6 14.6 6.2 14.6 L11.8 14.6" stroke="#7a7a7d" stroke-width="1.6"/><rect x="11.8" y="11.6" width="6" height="6" rx="1.6" stroke="#7a7a7d" stroke-width="1.6"/></svg><div style="position:absolute;left:546px;top:1065px;width:3px;height:33px;background:#7eb1de;border-radius:0px;box-sizing:border-box;"></div><div class="t" style="left:571px;top:1071px;font-size:22px;line-height:22px;color:#7eb1de;font-weight:400;font-family:'Liberation Sans', sans-serif;letter-spacing:-0.991px;">INFO</div><div class="t" style="left:731px;top:1071px;font-size:22px;line-height:22px;color:#c8c8ca;font-weight:400;font-family:'Liberation Sans', sans-serif;letter-spacing:-0.472px;">14:17:41.590</div><div class="t" style="left:907px;top:1071px;font-size:22px;line-height:22px;color:#c2c2c4;font-weight:400;font-family:'Liberation Sans', sans-serif;letter-spacing:0.665px;">opentelemetry-demo:productcatalogservice</div><div class="t" style="left:1483px;top:1073px;font-size:22px;line-height:22px;color:#c8c8ca;font-weight:400;font-family:'Liberation Mono', monospace;letter-spacing:-0.232px;">Product Found - ID: L9ECAV7KIM, Name: Lens Cleaning Kit</div><svg style="position:absolute;left:2612px;top:1068px;" width="20" height="20" viewBox="0 0 20 20" fill="none"><rect x="0.8" y="0.8" width="6" height="6" rx="1.6" stroke="#7a7a7d" stroke-width="1.6"/><path d="M3.8 6.8 L3.8 12 C3.8 13.6 4.6 14.6 6.2 14.6 L11.8 14.6" stroke="#7a7a7d" stroke-width="1.6"/><rect x="11.8" y="11.6" width="6" height="6" rx="1.6" stroke="#7a7a7d" stroke-width="1.6"/></svg><div style="position:absolute;left:546px;top:1113px;width:3px;height:33px;background:#7eb1de;border-radius:0px;box-sizing:border-box;"></div><div class="t" style="left:571px;top:1119px;font-size:22px;line-height:22px;color:#7eb1de;font-weight:400;font-family:'Liberation Sans', sans-serif;letter-spacing:-0.991px;">INFO</div><div class="t" style="left:731px;top:1119px;font-size:22px;line-height:22px;color:#c8c8ca;font-weight:400;font-family:'Liberation Sans', sans-serif;letter-spacing:-0.472px;">14:17:41.590</div><div class="t" style="left:907px;top:1119px;font-size:22px;line-height:22px;color:#c2c2c4;font-weight:400;font-family:'Liberation Sans', sans-serif;letter-spacing:0.665px;">opentelemetry-demo:productcatalogservice</div><div class="t" style="left:1483px;top:1121px;font-size:22px;line-height:22px;color:#c8c8ca;font-weight:400;font-family:'Liberation Mono', monospace;letter-spacing:-0.232px;">Product Found - ID: HQTGWGPNH4, Name: The Comet Book</div><svg style="position:absolute;left:2612px;top:1116px;" width="20" height="20" viewBox="0 0 20 20" fill="none"><rect x="0.8" y="0.8" width="6" height="6" rx="1.6" stroke="#7a7a7d" stroke-width="1.6"/><path d="M3.8 6.8 L3.8 12 C3.8 13.6 4.6 14.6 6.2 14.6 L11.8 14.6" stroke="#7a7a7d" stroke-width="1.6"/><rect x="11.8" y="11.6" width="6" height="6" rx="1.6" stroke="#7a7a7d" stroke-width="1.6"/></svg><div style="position:absolute;left:546px;top:1161px;width:3px;height:33px;background:#7eb1de;border-radius:0px;box-sizing:border-box;"></div><div class="t" style="left:571px;top:1167px;font-size:22px;line-height:22px;color:#7eb1de;font-weight:400;font-family:'Liberation Sans', sans-serif;letter-spacing:-0.991px;">INFO</div><div class="t" style="left:731px;top:1167px;font-size:22px;line-height:22px;color:#c8c8ca;font-weight:400;font-family:'Liberation Sans', sans-serif;letter-spacing:-0.472px;">14:17:41.590</div><div class="t" style="left:907px;top:1167px;font-size:22px;line-height:22px;color:#c2c2c4;font-weight:400;font-family:'Liberation Sans', sans-serif;letter-spacing:0.665px;">opentelemetry-demo:productcatalogservice</div><div class="t" style="left:1483px;top:1169px;font-size:22px;line-height:22px;color:#c8c8ca;font-weight:400;font-family:'Liberation Mono', monospace;letter-spacing:-0.232px;">Product Found - ID: 0PUK6V6EV0, Name: Solar System Color Imager</div><svg style="position:absolute;left:2612px;top:1164px;" width="20" height="20" viewBox="0 0 20 20" fill="none"><rect x="0.8" y="0.8" width="6" height="6" rx="1.6" stroke="#7a7a7d" stroke-width="1.6"/><path d="M3.8 6.8 L3.8 12 C3.8 13.6 4.6 14.6 6.2 14.6 L11.8 14.6" stroke="#7a7a7d" stroke-width="1.6"/><rect x="11.8" y="11.6" width="6" height="6" rx="1.6" stroke="#7a7a7d" stroke-width="1.6"/></svg><div style="position:absolute;left:546px;top:1208px;width:3px;height:65px;background:#7eb1de;border-radius:0px;box-sizing:border-box;"></div><div class="t" style="left:571px;top:1214px;font-size:22px;line-height:22px;color:#7eb1de;font-weight:400;font-family:'Liberation Sans', sans-serif;letter-spacing:-0.991px;">INFO</div><div class="t" style="left:731px;top:1214px;font-size:22px;line-height:22px;color:#c8c8ca;font-weight:400;font-family:'Liberation Sans', sans-serif;letter-spacing:-0.472px;">14:17:41.588</div><div class="t" style="left:907px;top:1214px;font-size:22px;line-height:22px;color:#c2c2c4;font-weight:400;font-family:'Liberation Sans', sans-serif;letter-spacing:0.639px;">opentelemetry-demo:recommendationservice</div><div class="t" style="left:1483px;top:1216px;font-size:22px;line-height:22px;color:#c8c8ca;font-weight:400;font-family:'Liberation Mono', monospace;letter-spacing:-0.232px;">Receive ListRecommendations for product ids:['HQTGWGPNH4', 'L9ECAV7KIM',</div><div class="t" style="left:1483px;top:1249px;font-size:22px;line-height:22px;color:#c8c8ca;font-weight:400;font-family:'Liberation Mono', monospace;letter-spacing:-0.232px;">'0PUK6V6EV0', 'OLJCESPC7Z', '1YMWWN1N40']</div><svg style="position:absolute;left:2612px;top:1211px;" width="20" height="20" viewBox="0 0 20 20" fill="none"><rect x="0.8" y="0.8" width="6" height="6" rx="1.6" stroke="#7a7a7d" stroke-width="1.6"/><path d="M3.8 6.8 L3.8 12 C3.8 13.6 4.6 14.6 6.2 14.6 L11.8 14.6" stroke="#7a7a7d" stroke-width="1.6"/><rect x="11.8" y="11.6" width="6" height="6" rx="1.6" stroke="#7a7a7d" stroke-width="1.6"/></svg><div style="position:absolute;left:546px;top:1288px;width:3px;height:33px;background:#7eb1de;border-radius:0px;box-sizing:border-box;"></div><div class="t" style="left:571px;top:1294px;font-size:22px;line-height:22px;color:#7eb1de;font-weight:400;font-family:'Liberation Sans', sans-serif;letter-spacing:-0.991px;">INFO</div><div class="t" style="left:731px;top:1294px;font-size:22px;line-height:22px;color:#c8c8ca;font-weight:400;font-family:'Liberation Sans', sans-serif;letter-spacing:-0.472px;">14:17:41.584</div><div class="t" style="left:907px;top:1294px;font-size:22px;line-height:22px;color:#c2c2c4;font-weight:400;font-family:'Liberation Sans', sans-serif;letter-spacing:0.693px;">opentelemetry-demo:currencyservice</div><div class="t" style="left:1483px;top:1296px;font-size:22px;line-height:22px;color:#c8c8ca;font-weight:400;font-family:'Liberation Mono', monospace;letter-spacing:-0.232px;">GetSupportedCurrencies successful</div><svg style="position:absolute;left:2612px;top:1291px;" width="20" height="20" viewBox="0 0 20 20" fill="none"><rect x="0.8" y="0.8" width="6" height="6" rx="1.6" stroke="#7a7a7d" stroke-width="1.6"/><path d="M3.8 6.8 L3.8 12 C3.8 13.6 4.6 14.6 6.2 14.6 L11.8 14.6" stroke="#7a7a7d" stroke-width="1.6"/><rect x="11.8" y="11.6" width="6" height="6" rx="1.6" stroke="#7a7a7d" stroke-width="1.6"/></svg><div style="position:absolute;left:546px;top:1336px;width:3px;height:33px;background:#7eb1de;border-radius:0px;box-sizing:border-box;"></div><div class="t" style="left:571px;top:1342px;font-size:22px;line-height:22px;color:#7eb1de;font-weight:400;font-family:'Liberation Sans', sans-serif;letter-spacing:-0.991px;">INFO</div><div class="t" style="left:731px;top:1342px;font-size:22px;line-height:22px;color:#c8c8ca;font-weight:400;font-family:'Liberation Sans', sans-serif;letter-spacing:-0.472px;">14:17:41.584</div><div class="t" style="left:907px;top:1342px;font-size:22px;line-height:22px;color:#727275;font-weight:400;font-family:'Liberation Sans', sans-serif;letter-spacing:0.268px;">Container</div><div class="t" style="left:1021px;top:1342px;font-size:22px;line-height:22px;color:#c8c8ca;font-weight:400;font-family:'Liberation Sans', sans-serif;letter-spacing:0.297px;">3e9b13b70a1a4415d658e66e5b9b9c2...</div><div class="t" style="left:1483px;top:1344px;font-size:22px;line-height:22px;color:#c8c8ca;font-weight:400;font-family:'Liberation Mono', monospace;letter-spacing:-0.232px;">GetCartAsync called with userId={userId}</div><svg style="position:absolute;left:2612px;top:1339px;" width="20" height="20" viewBox="0 0 20 20" fill="none"><rect x="0.8" y="0.8" width="6" height="6" rx="1.6" stroke="#7a7a7d" stroke-width="1.6"/><path d="M3.8 6.8 L3.8 12 C3.8 13.6 4.6 14.6 6.2 14.6 L11.8 14.6" stroke="#7a7a7d" stroke-width="1.6"/><rect x="11.8" y="11.6" width="6" height="6" rx="1.6" stroke="#7a7a7d" stroke-width="1.6"/></svg><div style="position:absolute;left:2640px;top:76px;width:2px;height:1304px;background:#1c1c1e;border-radius:0px;box-sizing:border-box;"></div>
</body></html>
